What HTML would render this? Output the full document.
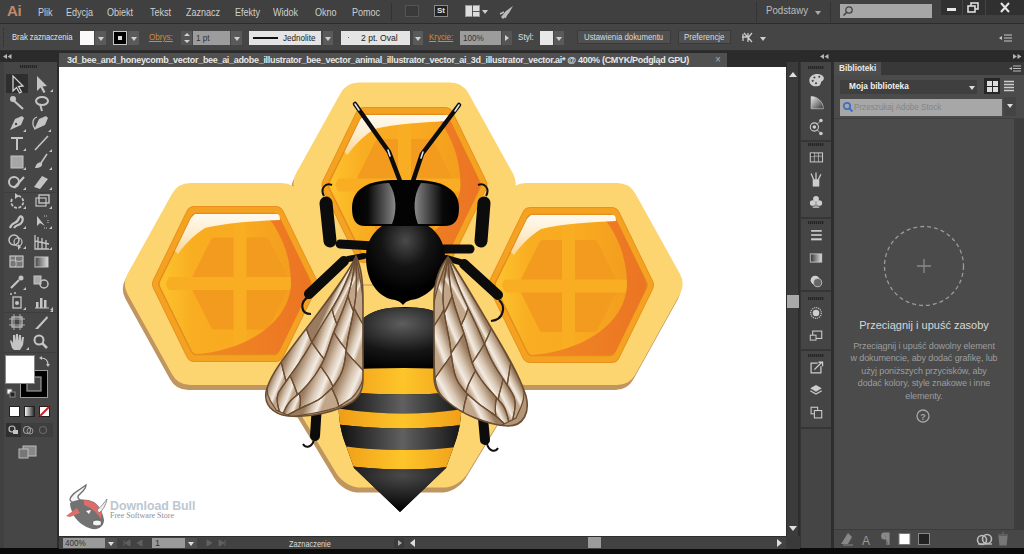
<!DOCTYPE html>
<html><head><meta charset="utf-8">
<style>
*{margin:0;padding:0;box-sizing:border-box}
html,body{width:1024px;height:554px;overflow:hidden;background:#0b0b0b;font-family:"Liberation Sans",sans-serif;position:relative}
.a{position:absolute}
.t{position:absolute;white-space:nowrap;line-height:1.15}
.arr{position:absolute;width:0;height:0;border-left:3px solid transparent;border-right:3px solid transparent;border-top:4px solid #cfcfcf}
</style></head><body>
<div class="a" style="left:0px;top:0px;width:1024px;height:24px;background:#404040;"></div>
<div class="a" style="left:0px;top:23px;width:1024px;height:1px;background:#2c2c2c;"></div>
<div class="t" style="left:7px;top:2px;font-size:15px;color:#c08a6a;font-weight:bold;letter-spacing:-0.3px;">Ai</div>
<div class="t" style="left:38px;top:6px;font-size:10.5px;color:#cfcfcf;transform:scaleX(0.86);transform-origin:0 0;">Plik</div>
<div class="t" style="left:66px;top:6px;font-size:10.5px;color:#cfcfcf;transform:scaleX(0.86);transform-origin:0 0;">Edycja</div>
<div class="t" style="left:107px;top:6px;font-size:10.5px;color:#cfcfcf;transform:scaleX(0.86);transform-origin:0 0;">Obiekt</div>
<div class="t" style="left:150px;top:6px;font-size:10.5px;color:#cfcfcf;transform:scaleX(0.86);transform-origin:0 0;">Tekst</div>
<div class="t" style="left:186px;top:6px;font-size:10.5px;color:#cfcfcf;transform:scaleX(0.86);transform-origin:0 0;">Zaznacz</div>
<div class="t" style="left:235px;top:6px;font-size:10.5px;color:#cfcfcf;transform:scaleX(0.86);transform-origin:0 0;">Efekty</div>
<div class="t" style="left:273px;top:6px;font-size:10.5px;color:#cfcfcf;transform:scaleX(0.86);transform-origin:0 0;">Widok</div>
<div class="t" style="left:315px;top:6px;font-size:10.5px;color:#cfcfcf;transform:scaleX(0.86);transform-origin:0 0;">Okno</div>
<div class="t" style="left:352px;top:6px;font-size:10.5px;color:#cfcfcf;transform:scaleX(0.86);transform-origin:0 0;">Pomoc</div>
<div class="a" style="left:391px;top:3px;width:1px;height:18px;background:#333;"></div>
<div class="a" style="left:405px;top:5px;width:14px;height:12px;background:#3a3a3a;border:1px solid #555;"></div>
<div class="a" style="left:434px;top:5px;width:14px;height:12px;background:#222;border:1px solid #8a8a8a;"></div>
<div class="t" style="left:437px;top:6px;font-size:8px;color:#e0e0e0;font-weight:bold;">St</div>
<div class="a" style="left:465px;top:5px;width:15px;height:12px;background:#ddd;border:1px solid #999;"></div>
<div class="a" style="left:472px;top:5px;width:1px;height:12px;background:#555;"></div>
<div class="a" style="left:473px;top:11px;width:7px;height:1px;background:#555;"></div>
<div class="arr" style="left:482px;top:10px"></div>
<svg class="a" style="left:497px;top:3px" width="20" height="18" viewBox="0 0 20 18"><path d="M4 14 L9 8 L16 3 L12 10 L6 16 Z" fill="#bdbdbd"/><path d="M3 11 L7 9 M8 15 L10 11" stroke="#bdbdbd" stroke-width="1.5"/></svg>
<div class="a" style="left:756px;top:2px;width:1px;height:20px;background:#333;"></div>
<div class="t" style="left:766px;top:5px;font-size:10px;color:#bdbdbd;transform:scaleX(0.97);transform-origin:0 0;">Podstawy</div>
<div class="arr" style="left:815px;top:11px;border-top-color:#aaa"></div>
<div class="a" style="left:830px;top:2px;width:1px;height:20px;background:#333;"></div>
<div class="a" style="left:840px;top:4px;width:92px;height:14px;background:#a6a6a6;"></div>
<svg class="a" style="left:842px;top:5px" width="12" height="12" viewBox="0 0 12 12"><circle cx="7" cy="5" r="3.2" fill="none" stroke="#444" stroke-width="1.3"/><path d="M4.8 7.3 L1.5 10.5" stroke="#444" stroke-width="1.6"/></svg>
<div class="a" style="left:941px;top:0px;width:83px;height:15px;background:#303030;"></div>
<div class="a" style="left:962px;top:0px;width:1px;height:15px;background:#444;"></div>
<div class="a" style="left:985px;top:0px;width:1px;height:15px;background:#444;"></div>
<div class="a" style="left:947px;top:8px;width:9px;height:3px;background:#e6e6e6;"></div>
<svg class="a" style="left:966px;top:1px" width="14" height="13" viewBox="0 0 14 13"><rect x="5" y="2" width="7" height="6" fill="none" stroke="#ddd" stroke-width="1.6"/><rect x="2" y="5" width="7" height="6" fill="#303030" stroke="#ddd" stroke-width="1.6"/></svg>
<svg class="a" style="left:999px;top:2px" width="12" height="11" viewBox="0 0 12 11"><path d="M2 1 L10 10 M10 1 L2 10" stroke="#e6e6e6" stroke-width="2"/></svg>
<div class="a" style="left:0px;top:24px;width:1024px;height:27px;background:#454545;"></div>
<div class="a" style="left:0px;top:50px;width:1024px;height:1px;background:#2e2e2e;"></div>
<div class="a" style="left:3px;top:28px;width:1px;height:1px;background:#2a2a2a;"></div>
<div class="a" style="left:3px;top:30px;width:1px;height:1px;background:#2a2a2a;"></div>
<div class="a" style="left:3px;top:32px;width:1px;height:1px;background:#2a2a2a;"></div>
<div class="a" style="left:3px;top:34px;width:1px;height:1px;background:#2a2a2a;"></div>
<div class="a" style="left:3px;top:36px;width:1px;height:1px;background:#2a2a2a;"></div>
<div class="a" style="left:3px;top:38px;width:1px;height:1px;background:#2a2a2a;"></div>
<div class="a" style="left:3px;top:40px;width:1px;height:1px;background:#2a2a2a;"></div>
<div class="a" style="left:3px;top:42px;width:1px;height:1px;background:#2a2a2a;"></div>
<div class="a" style="left:3px;top:44px;width:1px;height:1px;background:#2a2a2a;"></div>
<div class="a" style="left:3px;top:46px;width:1px;height:1px;background:#2a2a2a;"></div>
<div class="t" style="left:12px;top:32px;font-size:9px;color:#e2e2e2;transform:scaleX(0.85);transform-origin:0 0;">Brak zaznaczenia</div>
<div class="a" style="left:80px;top:31px;width:14px;height:14px;background:#fafafa;"></div>
<div class="a" style="left:95px;top:31px;width:11px;height:14px;background:#5a5a5a;"></div>
<div class="arr" style="left:98px;top:37px"></div>
<div class="a" style="left:113px;top:31px;width:14px;height:14px;background:#000;border:1px solid #c8c8c8;"></div>
<div class="a" style="left:118px;top:36px;width:4px;height:4px;background:#ddd;"></div>
<div class="a" style="left:128px;top:31px;width:11px;height:14px;background:#5a5a5a;"></div>
<div class="arr" style="left:131px;top:37px"></div>
<div class="t" style="left:149px;top:32px;font-size:9px;color:#d38a32;transform:scaleX(0.9);transform-origin:0 0;text-decoration:underline;">Obrys:</div>
<div class="a" style="left:181px;top:31px;width:11px;height:14px;background:#555;"></div>
<div class="a" style="left:184px;top:33px;width:0;height:0;border-left:3px solid transparent;border-right:3px solid transparent;border-bottom:3px solid #cfcfcf"></div>
<div class="arr" style="left:184px;top:40px;border-top-width:3px"></div>
<div class="a" style="left:193px;top:31px;width:37px;height:14px;background:#9c9c9c;"></div>
<div class="t" style="left:196px;top:33px;font-size:9px;color:#333;transform:scaleX(0.9);transform-origin:0 0;">1 pt</div>
<div class="a" style="left:231px;top:31px;width:11px;height:14px;background:#5a5a5a;"></div>
<div class="arr" style="left:234px;top:37px"></div>
<div class="a" style="left:249px;top:31px;width:72px;height:14px;background:#e4e4e4;"></div>
<div class="a" style="left:253px;top:37px;width:25px;height:2px;background:#111;"></div>
<div class="t" style="left:283px;top:33px;font-size:9px;color:#222;transform:scaleX(0.9);transform-origin:0 0;">Jednolite</div>
<div class="a" style="left:323px;top:31px;width:10px;height:14px;background:#5a5a5a;"></div>
<div class="arr" style="left:325px;top:37px"></div>
<div class="a" style="left:341px;top:31px;width:69px;height:14px;background:#e4e4e4;"></div>
<div class="a" style="left:348px;top:37px;width:1px;height:1px;background:#666;"></div>
<div class="t" style="left:361px;top:33px;font-size:9px;color:#222;transform:scaleX(0.95);transform-origin:0 0;">2 pt. Oval</div>
<div class="a" style="left:413px;top:31px;width:10px;height:14px;background:#5a5a5a;"></div>
<div class="arr" style="left:415px;top:37px"></div>
<div class="t" style="left:429px;top:32px;font-size:9px;color:#d38a32;transform:scaleX(0.88);transform-origin:0 0;text-decoration:underline;">Krycie:</div>
<div class="a" style="left:460px;top:31px;width:41px;height:14px;background:#9c9c9c;"></div>
<div class="t" style="left:463px;top:33px;font-size:9px;color:#333;transform:scaleX(0.9);transform-origin:0 0;">100%</div>
<div class="a" style="left:502px;top:31px;width:10px;height:14px;background:#555;"></div>
<div class="a" style="left:505px;top:35px;width:0;height:0;border-top:3px solid transparent;border-bottom:3px solid transparent;border-left:4px solid #cfcfcf"></div>
<div class="t" style="left:518px;top:32px;font-size:9px;color:#e2e2e2;transform:scaleX(0.9);transform-origin:0 0;">Styl:</div>
<div class="a" style="left:540px;top:31px;width:13px;height:14px;background:#e8e8e8;"></div>
<div class="a" style="left:554px;top:31px;width:10px;height:14px;background:#5a5a5a;"></div>
<div class="arr" style="left:556px;top:37px"></div>
<div class="a" style="left:577px;top:30px;width:94px;height:14px;background:#505050;border:1px solid #3a3a3a;"></div>
<div class="t" style="left:584px;top:32px;font-size:9px;color:#dcdcdc;transform:scaleX(0.87);transform-origin:0 0;">Ustawienia dokumentu</div>
<div class="a" style="left:678px;top:30px;width:53px;height:14px;background:#505050;border:1px solid #3a3a3a;"></div>
<div class="t" style="left:684px;top:32px;font-size:9px;color:#dcdcdc;transform:scaleX(0.88);transform-origin:0 0;">Preferencje</div>
<svg class="a" style="left:739px;top:30px" width="18" height="15" viewBox="0 0 18 15"><path d="M3 7 L8 7 M5 3 L13 12 M13 3 L9 8 M9 3 L9 12 M4 4 L4 11" stroke="#c8c8c8" stroke-width="1.3" fill="none"/></svg>
<div class="arr" style="left:760px;top:37px"></div>
<svg class="a" style="left:998px;top:32px" width="16" height="12" viewBox="0 0 16 12"><path d="M6 3 L14 3 M6 6 L14 6 M6 9 L14 9" stroke="#c8c8c8" stroke-width="1.2"/><path d="M1 6 L4 4 L4 8 Z" fill="#c8c8c8"/></svg>
<div class="a" style="left:0px;top:51px;width:59px;height:11px;background:#2a2a2a;"></div>
<svg class="a" style="left:3px;top:53px" width="10" height="7" viewBox="0 0 10 7"><path d="M0 3.5 L4 1 L4 6 Z M4.5 3.5 L8.5 1 L8.5 6 Z" fill="#b5b5b5"/></svg>
<div class="a" style="left:59px;top:51px;width:741px;height:16px;background:#2b2b2b;"></div>
<div class="a" style="left:59px;top:53px;width:668px;height:14px;background:#505050;"></div>
<div class="t" style="left:67px;top:55px;font-size:9px;color:#e6e6e6;font-weight:bold;letter-spacing:-0.31px;">3d_bee_and_honeycomb_vector_bee_ai_adobe_illustrator_bee_vector_animal_illustrator_vector_ai_3d_illustrator_vector.ai* @ 400% (CMYK/Podgląd GPU)</div>
<div class="t" style="left:715px;top:54px;font-size:10px;color:#aaa;">&#215;</div>
<div class="a" style="left:0px;top:62px;width:58px;height:486px;background:#464646;"></div>
<div class="a" style="left:0px;top:62px;width:4px;height:486px;background:#404040;"></div>
<div class="a" style="left:57px;top:62px;width:2px;height:486px;background:#2c2c2c;"></div>
<div class="a" style="left:20px;top:65px;width:17px;height:3px;background:#2a2a2a;background:repeating-linear-gradient(90deg,#252525 0 1px,#3c3c3c 1px 2px);"></div>
<div class="a" style="left:6px;top:74px;width:22px;height:19px;background:#2e2e2e;"></div>
<div class="a" style="left:4px;top:192px;width:52px;height:1px;background:#3d3d3d;"></div>
<div class="a" style="left:4px;top:312px;width:52px;height:1px;background:#3d3d3d;"></div>
<div class="a" style="left:4px;top:352px;width:52px;height:1px;background:#3d3d3d;"></div>
<svg class="a" style="left:0;top:62px" width="58" height="400" viewBox="0 62 58 400"><path d="M13 76 L13 91 L16.5 87.5 L19.5 93 L21.5 92 L18.5 86.5 L23 86 Z" fill="none" stroke="#d0d0d0" stroke-width="1.3"/><path d="M37 76 L37 91 L40.5 87.5 L43.5 93 L45.5 92 L42.5 86.5 L47 86 Z" fill="#c4c4c4"/><path d="M50 92 L53 92 L53 89 Z" fill="#c4c4c4"/><path d="M12 99 L23 109" stroke="#c4c4c4" stroke-width="2.2"/><circle cx="13" cy="99" r="3" fill="#c4c4c4"/><ellipse cx="42" cy="101" rx="6" ry="4" fill="none" stroke="#c4c4c4" stroke-width="2"/><path d="M40 104 L42 111" stroke="#c4c4c4" stroke-width="2"/><path d="M10 130 L15 119 L22 116 L24 118 L21 125 Z" fill="#c4c4c4"/><circle cx="16" cy="124" r="1.2" fill="#464646"/><path d="M23 132 L26 132 L26 129 Z" fill="#c4c4c4"/><path d="M34 130 L39 119 L46 116 L48 118 L45 125 Z" fill="#c4c4c4"/><path d="M35 129 C31 124 33 118 37 117" fill="none" stroke="#c4c4c4" stroke-width="1.2"/><path d="M48 132 L51 132 L51 129 Z" fill="#c4c4c4"/><path d="M11 137 L23 137 L23 139 L18 139 L18 150 L16 150 L16 139 L11 139 Z" fill="#c4c4c4"/><path d="M23 151 L26 151 L26 148 Z" fill="#c4c4c4"/><path d="M35 150 L48 136" stroke="#c4c4c4" stroke-width="1.6"/><path d="M49 152 L52 152 L52 149 Z" fill="#c4c4c4"/><rect x="11" y="156" width="12" height="12" fill="#a6a6a6" stroke="#c4c4c4" stroke-width="1"/><path d="M23 170 L26 170 L26 167 Z" fill="#c4c4c4"/><path d="M47 154 L41 163" stroke="#c4c4c4" stroke-width="1.5"/><path d="M35 168 C36 163 40 161 42 163 C43 166 40 168 35 168 Z" fill="#c4c4c4"/><path d="M49 170 L52 170 L52 167 Z" fill="#c4c4c4"/><circle cx="14" cy="182" r="5" fill="none" stroke="#c4c4c4" stroke-width="2"/><path d="M14 188 L24 177" stroke="#c4c4c4" stroke-width="2.2"/><path d="M23 190 L26 190 L26 187 Z" fill="#c4c4c4"/><path d="M34 187 L42 176 L48 179 L40 189 Z" fill="#c4c4c4"/><path d="M49 190 L52 190 L52 187 Z" fill="#c4c4c4"/><path d="M12 199 A6 6 0 1 0 16 196" fill="none" stroke="#c4c4c4" stroke-width="1.8" stroke-dasharray="3 1.5"/><path d="M15 193 L19 196 L15 199 Z" fill="#c4c4c4"/><path d="M23 209 L26 209 L26 206 Z" fill="#c4c4c4"/><rect x="36" y="198" width="10" height="8" fill="none" stroke="#c4c4c4" stroke-width="1.2"/><rect x="39" y="195" width="10" height="8" fill="none" stroke="#c4c4c4" stroke-width="1.4"/><path d="M49 209 L52 209 L52 206 Z" fill="#c4c4c4"/><path d="M10 228 C13 220 16 226 19 218 C21 214 24 218 22 222 C20 226 16 224 14 228" fill="none" stroke="#c4c4c4" stroke-width="2.2"/><path d="M23 229 L26 229 L26 226 Z" fill="#c4c4c4"/><path d="M37 216 L37 226 L40 223 L45 226 Z" fill="#c4c4c4"/><path d="M44 216 L48 216 M48 220 L48 224 M44 228 L48 228" stroke="#c4c4c4" stroke-width="1" stroke-dasharray="1 1"/><path d="M49 229 L52 229 L52 226 Z" fill="#c4c4c4"/><circle cx="14" cy="240" r="5" fill="none" stroke="#c4c4c4" stroke-width="1.5"/><circle cx="18" cy="242" r="4" fill="none" stroke="#c4c4c4" stroke-width="1.2"/><path d="M18 244 L18 250 L21 247 L24 250 Z" fill="#c4c4c4"/><path d="M23 249 L26 249 L26 246 Z" fill="#c4c4c4"/><path d="M35 235 L35 249 L49 249 M38 237 L38 249 M42 238 L42 249 M46 240 L46 249 M35 241 L49 244" fill="none" stroke="#c4c4c4" stroke-width="1.3"/><path d="M49 250 L52 250 L52 247 Z" fill="#c4c4c4"/><rect x="10" y="256" width="13" height="11" fill="#777" stroke="#c4c4c4" stroke-width="1.2"/><path d="M10 261 C14 258 18 264 23 260 M16 256 C14 260 18 264 15 267" fill="none" stroke="#c4c4c4" stroke-width="1"/><defs><linearGradient id="tg" x1="0" x2="1"><stop offset="0" stop-color="#444"/><stop offset="1" stop-color="#ddd"/></linearGradient></defs><rect x="35" y="257" width="13" height="10" fill="url(#tg)" stroke="#c4c4c4" stroke-width="1"/><path d="M11 288 L19 280" stroke="#c4c4c4" stroke-width="2.2"/><circle cx="21" cy="278" r="2.5" fill="#c4c4c4"/><path d="M23 290 L26 290 L26 287 Z" fill="#c4c4c4"/><rect x="34" y="276" width="7" height="8" fill="#aaa" stroke="#c4c4c4"/><circle cx="44" cy="284" r="4" fill="none" stroke="#c4c4c4" stroke-width="1.5"/><rect x="13" y="297" width="8" height="11" fill="none" stroke="#c4c4c4" stroke-width="1.3"/><circle cx="17" cy="303" r="2" fill="#c4c4c4"/><circle cx="11" cy="294" r="1" fill="#c4c4c4"/><circle cx="15" cy="293" r="1" fill="#c4c4c4"/><path d="M23 310 L26 310 L26 307 Z" fill="#c4c4c4"/><path d="M35 308 L49 308" stroke="#c4c4c4"/><rect x="36" y="302" width="2.5" height="6" fill="#c4c4c4"/><rect x="40" y="298" width="2.5" height="10" fill="#c4c4c4"/><rect x="44" y="300" width="2.5" height="8" fill="#c4c4c4"/><path d="M50 310 L53 310 L53 307 Z" fill="#c4c4c4"/><rect x="12" y="317" width="10" height="10" fill="none" stroke="#c4c4c4" stroke-width="1.2"/><path d="M9 319 L25 319 M9 325 L25 325 M14 314 L14 330 M20 314 L20 330" stroke="#c4c4c4" stroke-width="0.8"/><path d="M35 329 L47 316 L48 318 L38 329 Z" fill="#c4c4c4"/><path d="M50 312 L53 312 L53 309 Z" fill="#c4c4c4"/><path d="M12 348 L10 341 L11 340 L13 343 L13 335 L15 335 L15 341 L16 334 L18 334 L18 341 L19 335 L21 335 L21 342 L22 337 L24 337 L23 345 L20 350 L14 350 Z" fill="#c4c4c4"/><path d="M26 350 L29 350 L29 347 Z" fill="#c4c4c4"/><circle cx="39" cy="340" r="4.5" fill="none" stroke="#c4c4c4" stroke-width="2"/><path d="M42 343 L47 348" stroke="#c4c4c4" stroke-width="2.5"/><rect x="20.5" y="370.5" width="27" height="27" fill="#000" stroke="#999" stroke-width="1"/><rect x="27" y="377" width="14" height="14" fill="#444" stroke="#999" stroke-width="1.2"/><rect x="5.5" y="355.5" width="29" height="28" fill="#fff" stroke="#888" stroke-width="1"/><path d="M41 358 C46 358 48 361 48 365" fill="none" stroke="#c4c4c4" stroke-width="1.2"/><path d="M39 358 L42 356 L42 360 Z M46 364 L50 364 L48 367 Z" fill="#c4c4c4"/><rect x="7" y="389" width="5" height="5" fill="#fff" stroke="#666"/><rect x="10" y="392" width="5" height="5" fill="#222" stroke="#888"/><rect x="9.5" y="406.5" width="10" height="10" fill="#fff" stroke="#222"/><defs><linearGradient id="tg2" x1="0" x2="1"><stop offset="0" stop-color="#fff"/><stop offset="1" stop-color="#222"/></linearGradient></defs><rect x="24.5" y="406.5" width="10" height="10" fill="url(#tg2)" stroke="#222"/><rect x="39.5" y="406.5" width="10" height="10" fill="#fff" stroke="#222"/><path d="M40 416 L49 407" stroke="#d02020" stroke-width="2"/><rect x="6" y="423" width="47" height="14" fill="#3e3e3e"/><rect x="6" y="423" width="15" height="14" fill="#2f2f2f"/><circle cx="12" cy="429" r="3" fill="none" stroke="#c4c4c4" stroke-width="1.2"/><rect x="13" y="430" width="5" height="4" fill="#c4c4c4"/><circle cx="27" cy="430" r="3.5" fill="none" stroke="#999" stroke-width="1.2"/><circle cx="30" cy="431" r="3" fill="none" stroke="#999" stroke-width="1"/><circle cx="43" cy="430" r="3.5" fill="none" stroke="#666" stroke-width="1.2"/><rect x="23" y="446" width="13" height="10" fill="#888" stroke="#bbb"/><rect x="19" y="449" width="9" height="9" fill="#777" stroke="#bbb"/></svg>
<div class="a" style="left:59px;top:67px;width:727px;height:469px;background:#fff"></div>
<svg class="a" style="left:59px;top:67px" width="727" height="469" viewBox="59 67 727 469">
<defs>
<linearGradient id="honey" x1="0" y1="0" x2="1" y2="0"><stop offset="0" stop-color="#fcc02c"/><stop offset="0.2" stop-color="#f9ad21"/><stop offset="0.6" stop-color="#f8a920"/><stop offset="1" stop-color="#f29a1e"/></linearGradient>
<linearGradient id="cres" x1="0" y1="0" x2="1" y2="0"><stop offset="0" stop-color="#f08a22"/><stop offset="1" stop-color="#ec7424"/></linearGradient>
<linearGradient id="glare" x1="0" y1="0" x2="0" y2="1"><stop offset="0" stop-color="#fffaf0"/><stop offset="0.5" stop-color="#fdeccc"/><stop offset="1" stop-color="#fbd393"/></linearGradient>
<linearGradient id="wing" gradientUnits="userSpaceOnUse" x1="280" y1="300" x2="370" y2="345"><stop offset="0" stop-color="#9e8064"/><stop offset="0.18" stop-color="#e8ddd0"/><stop offset="0.32" stop-color="#ae9073"/><stop offset="0.5" stop-color="#efe6dc"/><stop offset="0.66" stop-color="#a98b6d"/><stop offset="0.82" stop-color="#e2d4c3"/><stop offset="1" stop-color="#b0927a"/></linearGradient>
<linearGradient id="wingR" gradientUnits="userSpaceOnUse" x1="530" y1="300" x2="440" y2="345"><stop offset="0" stop-color="#9e8064"/><stop offset="0.18" stop-color="#e8ddd0"/><stop offset="0.32" stop-color="#ae9073"/><stop offset="0.5" stop-color="#efe6dc"/><stop offset="0.66" stop-color="#a98b6d"/><stop offset="0.82" stop-color="#e2d4c3"/><stop offset="1" stop-color="#b0927a"/></linearGradient>
<radialGradient id="thor" cx="0.5" cy="0.25" r="0.6"><stop offset="0" stop-color="#4a4a4a"/><stop offset="0.5" stop-color="#141414"/><stop offset="1" stop-color="#000"/></radialGradient>
<linearGradient id="eyeL" x1="0" x2="1"><stop offset="0" stop-color="#000"/><stop offset="0.35" stop-color="#080808"/><stop offset="0.88" stop-color="#6e6e6e"/><stop offset="1" stop-color="#8a8a8a"/></linearGradient>
<linearGradient id="eyeR" x1="1" x2="0"><stop offset="0" stop-color="#000"/><stop offset="0.35" stop-color="#080808"/><stop offset="0.88" stop-color="#6e6e6e"/><stop offset="1" stop-color="#8a8a8a"/></linearGradient>
<linearGradient id="ystripe" x1="0" y1="0" x2="1" y2="0"><stop offset="0" stop-color="#ef9a16"/><stop offset="0.5" stop-color="#fdc52a"/><stop offset="1" stop-color="#ef9a16"/></linearGradient>
<linearGradient id="bstripe" x1="0" y1="0" x2="1" y2="0"><stop offset="0" stop-color="#0a0a0a"/><stop offset="0.5" stop-color="#606060"/><stop offset="1" stop-color="#0a0a0a"/></linearGradient>
<radialGradient id="abtop" cx="0.5" cy="0.25" r="0.75"><stop offset="0" stop-color="#5e5e5e"/><stop offset="0.6" stop-color="#151515"/><stop offset="1" stop-color="#000"/></radialGradient>
<linearGradient id="rimg" x1="0" y1="0" x2="0" y2="1"><stop offset="0" stop-color="#fdd877"/><stop offset="1" stop-color="#fbd068"/></linearGradient>
</defs>
<polygon points="324.0,289.0 279.6,369.0 188.4,369.0 144.0,289.0 188.4,209.0 279.6,209.0" fill="#c09660" stroke="#c09660" stroke-width="42" stroke-linejoin="round" />
<polygon points="492.5,188.5 448.1,268.5 356.9,268.5 312.5,188.5 356.9,108.5 448.1,108.5" fill="#c09660" stroke="#c09660" stroke-width="42" stroke-linejoin="round" />
<polygon points="659.5,289.0 615.1,369.0 523.9,369.0 479.5,289.0 523.9,209.0 615.1,209.0" fill="#c09660" stroke="#c09660" stroke-width="42" stroke-linejoin="round" />
<polygon points="483.0,391.5 440.1,462.5 359.9,462.5 317.0,391.5 359.9,320.5 440.1,320.5" fill="#c09660" stroke="#c09660" stroke-width="60" stroke-linejoin="round" />
<polygon points="326.0,284.0 281.6,364.0 190.4,364.0 146.0,284.0 190.4,204.0 281.6,204.0" fill="#fcd470" stroke="#fcd470" stroke-width="42" stroke-linejoin="round" />
<polygon points="494.5,183.5 450.1,263.5 358.9,263.5 314.5,183.5 358.9,103.5 450.1,103.5" fill="#fcd470" stroke="#fcd470" stroke-width="42" stroke-linejoin="round" />
<polygon points="661.5,284.0 617.1,364.0 525.9,364.0 481.5,284.0 525.9,204.0 617.1,204.0" fill="#fcd470" stroke="#fcd470" stroke-width="42" stroke-linejoin="round" />
<polygon points="485.0,386.5 442.1,457.5 361.9,457.5 319.0,386.5 361.9,315.5 442.1,315.5" fill="#fcd470" stroke="#fcd470" stroke-width="60" stroke-linejoin="round" />
<polygon points="309.0,284.0 275.4,353.0 194.6,353.0 161.0,284.0 194.6,215.0 275.4,215.0" fill="#ea911c" stroke="#ea911c" stroke-width="18" stroke-linejoin="round" />
<polygon points="309.1,284.0 275.5,353.0 194.5,353.0 160.9,284.0 194.5,215.0 275.5,215.0" fill="#f4a221" stroke="#f4a221" stroke-width="16" stroke-linejoin="round" />
<polygon points="304.8,284.0 273.0,348.3 197.0,348.3 165.2,284.0 197.0,219.7 273.0,219.7" fill="#e58c1c" stroke="#e58c1c" stroke-width="14" stroke-linejoin="round" />
<polygon points="304.3,284.0 272.8,348.0 197.2,348.0 165.7,284.0 197.2,220.0 272.8,220.0" fill="url(#honey)" stroke="url(#honey)" stroke-width="12" stroke-linejoin="round" />
<clipPath id="hcL"><polygon points="304.3,284.0 272.8,348.0 197.2,348.0 165.7,284.0 197.2,220.0 272.8,220.0" fill="#000" stroke="#000" stroke-width="12" stroke-linejoin="round" />
</clipPath><g clip-path="url(#hcL)"><polygon points="286.5,283.5 265.5,325.5 214.5,325.5 193.5,283.5 214.5,241.5 265.5,241.5" fill="#f39b1f" stroke="#f39b1f" stroke-width="8" stroke-linejoin="round" />
<rect x="233.5" y="204" width="13" height="160" fill="#f8ad23"/>
<rect x="145" y="277.0" width="180" height="13" fill="#f8ad23"/>
</g><path d="M265,214 L273,214 C277,214 279,216 281,220 L309,278 C311,282 311,286 309,290 L281,348 C279,352 277,354 273,354 L197,354 C245,350 289,324 291,284 C291,254 279,229 265,214 Z" fill="url(#cres)"/>
<path d="M195,214 L277,214 C279,214 280,216 280,220 C255,221 225,223 205,228 C195,234 185,244 178,254 L175,251 L191,218 Z" fill="url(#glare)"/>
<polygon points="478.5,185.0 444.9,254.0 364.1,254.0 330.5,185.0 364.1,116.0 444.9,116.0" fill="#ea911c" stroke="#ea911c" stroke-width="18" stroke-linejoin="round" />
<polygon points="478.6,185.0 445.0,254.0 364.0,254.0 330.4,185.0 364.0,116.0 445.0,116.0" fill="#f4a221" stroke="#f4a221" stroke-width="16" stroke-linejoin="round" />
<polygon points="474.3,185.0 442.5,249.3 366.5,249.3 334.7,185.0 366.5,120.7 442.5,120.7" fill="#e58c1c" stroke="#e58c1c" stroke-width="14" stroke-linejoin="round" />
<polygon points="473.8,185.0 442.3,249.0 366.7,249.0 335.2,185.0 366.7,121.0 442.3,121.0" fill="url(#honey)" stroke="url(#honey)" stroke-width="12" stroke-linejoin="round" />
<clipPath id="hcC"><polygon points="473.8,185.0 442.3,249.0 366.7,249.0 335.2,185.0 366.7,121.0 442.3,121.0" fill="#000" stroke="#000" stroke-width="12" stroke-linejoin="round" />
</clipPath><g clip-path="url(#hcC)"><polygon points="451.0,185.0 430.0,227.0 379.0,227.0 358.0,185.0 379.0,143.0 430.0,143.0" fill="#f39b1f" stroke="#f39b1f" stroke-width="8" stroke-linejoin="round" />
<rect x="398.0" y="105" width="13" height="160" fill="#f8ad23"/>
<rect x="314.5" y="178.5" width="180" height="13" fill="#f8ad23"/>
</g><path d="M434.5,115 L442.5,115 C446.5,115 448.5,117 450.5,121 L478.5,179 C480.5,183 480.5,187 478.5,191 L450.5,249 C448.5,253 446.5,255 442.5,255 L366.5,255 C414.5,251 458.5,225 460.5,185 C460.5,155 448.5,130 434.5,115 Z" fill="url(#cres)"/>
<path d="M364.5,115 L446.5,115 C448.5,115 449.5,117 449.5,121 C424.5,122 394.5,124 374.5,129 C364.5,135 354.5,145 347.5,155 L344.5,152 L360.5,119 Z" fill="url(#glare)"/>
<polygon points="645.0,285.0 611.4,354.0 530.6,354.0 497.0,285.0 530.6,216.0 611.4,216.0" fill="#ea911c" stroke="#ea911c" stroke-width="18" stroke-linejoin="round" />
<polygon points="645.1,285.0 611.5,354.0 530.5,354.0 496.9,285.0 530.5,216.0 611.5,216.0" fill="#f4a221" stroke="#f4a221" stroke-width="16" stroke-linejoin="round" />
<polygon points="640.8,285.0 609.0,349.3 533.0,349.3 501.2,285.0 533.0,220.7 609.0,220.7" fill="#e58c1c" stroke="#e58c1c" stroke-width="14" stroke-linejoin="round" />
<polygon points="640.3,285.0 608.8,349.0 533.2,349.0 501.7,285.0 533.2,221.0 608.8,221.0" fill="url(#honey)" stroke="url(#honey)" stroke-width="12" stroke-linejoin="round" />
<clipPath id="hcR"><polygon points="640.3,285.0 608.8,349.0 533.2,349.0 501.7,285.0 533.2,221.0 608.8,221.0" fill="#000" stroke="#000" stroke-width="12" stroke-linejoin="round" />
</clipPath><g clip-path="url(#hcR)"><polygon points="615.0,286.0 594.0,328.0 543.0,328.0 522.0,286.0 543.0,244.0 594.0,244.0" fill="#f39b1f" stroke="#f39b1f" stroke-width="8" stroke-linejoin="round" />
<rect x="562.0" y="205" width="13" height="160" fill="#f8ad23"/>
<rect x="481" y="279.5" width="180" height="13" fill="#f8ad23"/>
</g><path d="M601,215 L609,215 C613,215 615,217 617,221 L645,279 C647,283 647,287 645,291 L617,349 C615,353 613,355 609,355 L533,355 C581,351 625,325 627,285 C627,255 615,230 601,215 Z" fill="url(#cres)"/>
<path d="M531,215 L613,215 C615,215 616,217 616,221 C591,222 561,224 541,229 C531,235 521,245 514,255 L511,252 L527,219 Z" fill="url(#glare)"/>
<path d="M355,104 L389,152 L400,181" fill="none" stroke="#0c0c0c" stroke-width="4.5" stroke-linecap="round" stroke-linejoin="round"/>
<path d="M459,105 L422,154 L413,181" fill="none" stroke="#0c0c0c" stroke-width="4.5" stroke-linecap="round" stroke-linejoin="round"/>
<path d="M355,104 L359,110" stroke="#e6e6e6" stroke-width="1.6" stroke-linecap="round"/>
<path d="M388,150 L390,156" stroke="#e6e6e6" stroke-width="1.6" stroke-linecap="round"/>
<path d="M459,105 L455,111" stroke="#e6e6e6" stroke-width="1.6" stroke-linecap="round"/>
<path d="M423,152 L421,158" stroke="#e6e6e6" stroke-width="1.6" stroke-linecap="round"/>
<path d="M326,203 L330,241" fill="none" stroke="#0c0c0c" stroke-width="13" stroke-linecap="round"/>
<path d="M340,244 L374,246" fill="none" stroke="#0c0c0c" stroke-width="9" stroke-linecap="round"/>
<path d="M484,203 L481,241" fill="none" stroke="#0c0c0c" stroke-width="13" stroke-linecap="round"/>
<path d="M444,249 L470,249" fill="none" stroke="#0c0c0c" stroke-width="9" stroke-linecap="round"/>
<path d="M324,196 C320,189 325,182 332,185" fill="none" stroke="#111" stroke-width="2"/>
<path d="M486,196 C490,189 485,182 478,185" fill="none" stroke="#111" stroke-width="2"/>
<path d="M344,261 L309,294" fill="none" stroke="#0c0c0c" stroke-width="10" stroke-linecap="round"/>
<path d="M364,256 L348,259" fill="none" stroke="#0c0c0c" stroke-width="6" stroke-linecap="round"/>
<path d="M464,264 L498,295" fill="none" stroke="#0c0c0c" stroke-width="10" stroke-linecap="round"/>
<path d="M446,258 L460,262" fill="none" stroke="#0c0c0c" stroke-width="6" stroke-linecap="round"/>
<path d="M308,297 C300,302 300,314 311,314" fill="none" stroke="#111" stroke-width="2.2"/>
<path d="M499,300 C506,306 504,320 491,321" fill="none" stroke="#111" stroke-width="2.2"/>
<path d="M317,404 L315,436" fill="none" stroke="#0c0c0c" stroke-width="10" stroke-linecap="round"/>
<path d="M482,407 L485,440" fill="none" stroke="#0c0c0c" stroke-width="10" stroke-linecap="round"/>
<path d="M314,440 C312,447 306,449 303,444" fill="none" stroke="#111" stroke-width="2"/>
<path d="M487,444 C489,451 495,453 498,448" fill="none" stroke="#111" stroke-width="2"/>
<path d="M405,307 C438,307 455,318 456,342 L461,398 C462,410 461,425 456,440 L446,468 L400,512 L354,468 L344,440 C339,425 338,410 339,398 L353,342 C354,318 372,307 405,307 Z" fill="#050505"/>
<clipPath id="abclip"><path d="M405,307 C438,307 455,318 456,342 L461,398 C462,410 461,425 456,440 L446,468 L400,512 L354,468 L344,440 C339,425 338,410 339,398 L353,342 C354,318 372,307 405,307 Z"/></clipPath>
<g clip-path="url(#abclip)">
<rect x="340" y="308" width="125" height="63" fill="url(#abtop)"/>
<path d="M335,370 Q405,366 470,370 L470,391 Q405,398 335,391 Z" fill="url(#ystripe)"/>
<path d="M335,391 Q405,398 470,391 L470,408 Q405,419 335,408 Z" fill="url(#bstripe)"/>
<path d="M335,408 Q405,419 470,408 L470,424 Q405,433 335,424 Z" fill="url(#ystripe)"/>
<path d="M335,424 Q405,433 470,424 L470,445 Q405,455 335,445 Z" fill="url(#bstripe)"/>
<path d="M335,445 Q405,455 470,445 L470,464 Q405,475 335,464 Z" fill="url(#ystripe)"/>
<radialGradient id="tip" cx="0.5" cy="0.2" r="0.6"><stop offset="0" stop-color="#4a4a4a"/><stop offset="1" stop-color="#050505"/></radialGradient>
<path d="M335,464 Q405,475 470,464 L470,520 L335,520 Z" fill="url(#tip)"/>
</g>
<path d="M405,219 C428,219 445,236 445,257 C445,278 432,294 416,299 C410,300 406,301 403,305 C400,301 396,300 390,299 C375,294 366,278 366,257 C366,236 382,219 405,219 Z" fill="url(#thor)"/>
<path d="M352,208 C352,190 366,181 392,180 L418,180 C444,181 459,190 459,208 C459,220 455,226 444,226 L365,226 C356,226 352,220 352,208 Z" fill="#030303"/>
<path d="M353,208 C353,193 366,184 389,183 C397,195 397,212 392,224 L368,224 C358,224 353,218 353,208 Z" fill="url(#eyeL)"/>
<path d="M458,208 C458,193 445,184 421,183 C413,195 413,212 418,224 L443,224 C453,224 458,218 458,208 Z" fill="url(#eyeR)"/>
<clipPath id="wl"><path d="M356,256 C350,270 330,298 299,338 C286,356 270,374 266,392 C264,404 272,414 288,416 C310,418 336,412 352,402 C360,396 363,390 363,378 L363,300 C363,280 361,266 356,256 Z"/></clipPath><clipPath id="wr"><path d="M448,257 C456,268 470,292 490,326 C502,346 518,372 526,396 C530,412 524,426 508,426 C486,425 462,414 448,402 C438,394 434,388 434,376 L434,300 C434,282 440,266 448,257 Z"/></clipPath>
<filter id="bl" x="-20%" y="-20%" width="140%" height="140%"><feGaussianBlur stdDeviation="2"/></filter>
<g clip-path="url(#wl)"><path d="M356,256 C350,270 330,298 299,338 C286,356 270,374 266,392 C264,404 272,414 288,416 C310,418 336,412 352,402 C360,396 363,390 363,378 L363,300 C363,280 361,266 356,256 Z" fill="#b39577"/><defs><linearGradient id="wgl0" gradientUnits="userSpaceOnUse" x1="334.5" y1="291.6" x2="340.2" y2="294.2"><stop offset="0" stop-color="#9a7b5f"/><stop offset="0.45" stop-color="#d8c6b2"/><stop offset="0.75" stop-color="#f3ece4"/><stop offset="1" stop-color="#c2a68a"/></linearGradient><linearGradient id="wgl1" gradientUnits="userSpaceOnUse" x1="289.7" y1="348.7" x2="304.4" y2="354.6"><stop offset="0" stop-color="#9a7b5f"/><stop offset="0.45" stop-color="#d8c6b2"/><stop offset="0.75" stop-color="#f3ece4"/><stop offset="1" stop-color="#c2a68a"/></linearGradient><linearGradient id="wgl2" gradientUnits="userSpaceOnUse" x1="267.0" y1="388.0" x2="278.4" y2="392.6"><stop offset="0" stop-color="#9a7b5f"/><stop offset="0.45" stop-color="#d8c6b2"/><stop offset="0.75" stop-color="#f3ece4"/><stop offset="1" stop-color="#c2a68a"/></linearGradient><linearGradient id="wgl3" gradientUnits="userSpaceOnUse" x1="345.8" y1="282.6" x2="350.8" y2="285.1"><stop offset="0" stop-color="#9a7b5f"/><stop offset="0.45" stop-color="#d8c6b2"/><stop offset="0.75" stop-color="#f3ece4"/><stop offset="1" stop-color="#c2a68a"/></linearGradient><linearGradient id="wgl4" gradientUnits="userSpaceOnUse" x1="318.1" y1="331.3" x2="332.2" y2="336.2"><stop offset="0" stop-color="#9a7b5f"/><stop offset="0.45" stop-color="#d8c6b2"/><stop offset="0.75" stop-color="#f3ece4"/><stop offset="1" stop-color="#c2a68a"/></linearGradient><linearGradient id="wgl5" gradientUnits="userSpaceOnUse" x1="299.6" y1="362.0" x2="318.3" y2="370.1"><stop offset="0" stop-color="#9a7b5f"/><stop offset="0.45" stop-color="#d8c6b2"/><stop offset="0.75" stop-color="#f3ece4"/><stop offset="1" stop-color="#c2a68a"/></linearGradient><linearGradient id="wgl6" gradientUnits="userSpaceOnUse" x1="277.2" y1="397.1" x2="289.5" y2="402.0"><stop offset="0" stop-color="#9a7b5f"/><stop offset="0.45" stop-color="#d8c6b2"/><stop offset="0.75" stop-color="#f3ece4"/><stop offset="1" stop-color="#c2a68a"/></linearGradient><linearGradient id="wgl7" gradientUnits="userSpaceOnUse" x1="352.6" y1="276.4" x2="356.4" y2="278.3"><stop offset="0" stop-color="#9a7b5f"/><stop offset="0.45" stop-color="#d8c6b2"/><stop offset="0.75" stop-color="#f3ece4"/><stop offset="1" stop-color="#c2a68a"/></linearGradient><linearGradient id="wgl8" gradientUnits="userSpaceOnUse" x1="338.7" y1="320.1" x2="350.8" y2="324.6"><stop offset="0" stop-color="#9a7b5f"/><stop offset="0.45" stop-color="#d8c6b2"/><stop offset="0.75" stop-color="#f3ece4"/><stop offset="1" stop-color="#c2a68a"/></linearGradient><linearGradient id="wgl9" gradientUnits="userSpaceOnUse" x1="325.6" y1="355.4" x2="344.4" y2="362.7"><stop offset="0" stop-color="#9a7b5f"/><stop offset="0.45" stop-color="#d8c6b2"/><stop offset="0.75" stop-color="#f3ece4"/><stop offset="1" stop-color="#c2a68a"/></linearGradient><linearGradient id="wgl10" gradientUnits="userSpaceOnUse" x1="306.3" y1="385.9" x2="326.0" y2="393.9"><stop offset="0" stop-color="#9a7b5f"/><stop offset="0.45" stop-color="#d8c6b2"/><stop offset="0.75" stop-color="#f3ece4"/><stop offset="1" stop-color="#c2a68a"/></linearGradient><linearGradient id="wgl11" gradientUnits="userSpaceOnUse" x1="286.2" y1="407.1" x2="295.6" y2="410.8"><stop offset="0" stop-color="#9a7b5f"/><stop offset="0.45" stop-color="#d8c6b2"/><stop offset="0.75" stop-color="#f3ece4"/><stop offset="1" stop-color="#c2a68a"/></linearGradient><linearGradient id="wgl12" gradientUnits="userSpaceOnUse" x1="356.4" y1="283.0" x2="361.2" y2="285.3"><stop offset="0" stop-color="#9a7b5f"/><stop offset="0.45" stop-color="#d8c6b2"/><stop offset="0.75" stop-color="#f3ece4"/><stop offset="1" stop-color="#c2a68a"/></linearGradient><linearGradient id="wgl13" gradientUnits="userSpaceOnUse" x1="348.4" y1="335.7" x2="363.1" y2="340.8"><stop offset="0" stop-color="#9a7b5f"/><stop offset="0.45" stop-color="#d8c6b2"/><stop offset="0.75" stop-color="#f3ece4"/><stop offset="1" stop-color="#c2a68a"/></linearGradient><linearGradient id="wgl14" gradientUnits="userSpaceOnUse" x1="340.3" y1="375.3" x2="361.2" y2="384.0"><stop offset="0" stop-color="#9a7b5f"/><stop offset="0.45" stop-color="#d8c6b2"/><stop offset="0.75" stop-color="#f3ece4"/><stop offset="1" stop-color="#c2a68a"/></linearGradient><linearGradient id="wgl15" gradientUnits="userSpaceOnUse" x1="305.4" y1="405.9" x2="320.4" y2="411.9"><stop offset="0" stop-color="#9a7b5f"/><stop offset="0.45" stop-color="#d8c6b2"/><stop offset="0.75" stop-color="#f3ece4"/><stop offset="1" stop-color="#c2a68a"/></linearGradient></defs><path d="M356.0,256.0 L356.0,256.0 L356.0,256.0 L356.0,256.0 L356.0,256.0 L356.0,256.0 L356.0,256.0 L356.0,256.0 L356.0,256.0 L353.5,262.8 L349.8,272.7 L345.3,283.6 L340.2,294.2 L334.1,305.1 L327.3,316.3 L320.7,327.0 L311.8,342.3 L311.0,340.5 L310.1,338.6 L309.4,336.8 L308.7,335.0 L308.0,333.3 L307.4,331.5 L306.9,329.8 L306.4,328.1 L310.1,323.3 L318.3,312.9 L326.7,302.1 L334.5,291.6 L341.2,281.6 L347.3,271.4 L352.4,262.3 Z" fill="url(#wgl0)"/><path d="M306.4,328.1 L306.9,329.8 L307.4,331.5 L308.0,333.3 L308.7,335.0 L309.4,336.8 L310.1,338.6 L311.0,340.5 L311.8,342.3 L312.1,341.8 L309.6,346.2 L307.0,350.4 L304.4,354.6 L301.7,358.7 L299.0,363.0 L295.3,368.4 L286.0,381.4 L285.4,379.0 L284.8,376.6 L284.1,374.1 L283.5,371.5 L282.8,369.0 L282.2,366.4 L281.6,363.8 L280.9,361.1 L280.4,361.9 L284.0,356.5 L286.8,352.6 L289.7,348.7 L292.8,344.9 L296.0,340.9 L299.3,336.9 Z" fill="url(#wgl1)"/><path d="M280.9,361.1 L281.6,363.8 L282.2,366.4 L282.8,369.0 L283.5,371.5 L284.1,374.1 L284.8,376.6 L285.4,379.0 L286.0,381.4 L287.4,379.5 L284.1,384.1 L281.1,388.5 L278.4,392.6 L277.1,398.3 L277.5,403.6 L278.5,408.2 L279.2,411.4 L278.8,411.2 L278.4,411.1 L278.0,410.9 L277.6,410.7 L277.2,410.5 L276.8,410.4 L276.4,410.2 L276.0,410.0 L273.8,406.2 L270.5,400.9 L267.7,394.6 L267.0,388.0 L268.1,383.5 L270.1,378.7 L272.9,373.6 Z" fill="url(#wgl2)"/><path d="M356.0,256.0 L356.0,256.0 L356.0,256.0 L356.0,256.0 L356.0,256.0 L356.0,256.0 L356.0,256.0 L356.0,256.0 L356.0,256.0 L355.1,261.0 L354.0,268.1 L352.6,276.4 L350.8,285.1 L348.7,293.4 L346.0,301.5 L342.9,309.9 L337.0,324.2 L336.1,322.3 L335.3,320.3 L334.6,318.3 L334.0,316.3 L333.4,314.4 L332.9,312.4 L332.4,310.5 L332.0,308.6 L333.5,306.1 L338.1,298.1 L342.2,290.4 L345.8,282.6 L349.1,274.6 L351.9,267.0 L354.3,260.6 Z" fill="url(#wgl3)"/><path d="M332.0,308.6 L332.4,310.5 L332.9,312.4 L333.4,314.4 L334.0,316.3 L334.6,318.3 L335.3,320.3 L336.1,322.3 L337.0,324.2 L337.5,323.0 L335.6,327.5 L333.8,331.9 L332.2,336.2 L330.6,340.8 L329.1,345.3 L327.7,349.6 L324.1,359.1 L322.4,356.9 L320.7,354.8 L319.1,352.6 L317.5,350.5 L316.0,348.4 L314.6,346.4 L313.2,344.3 L311.8,342.3 L311.2,343.4 L313.5,339.5 L315.8,335.4 L318.1,331.3 L320.6,327.2 L323.1,323.0 L325.8,318.7 Z" fill="url(#wgl4)"/><path d="M311.8,342.3 L313.2,344.3 L314.6,346.4 L316.0,348.4 L317.5,350.5 L319.1,352.6 L320.7,354.8 L322.4,356.9 L324.1,359.1 L324.5,358.0 L322.8,361.9 L320.7,365.8 L318.3,370.1 L315.4,374.5 L311.6,379.7 L307.5,384.6 L297.3,394.8 L296.8,392.7 L296.1,390.5 L295.2,388.2 L294.3,385.8 L293.3,383.4 L292.3,380.8 L291.2,378.3 L290.2,375.6 L289.1,377.1 L293.0,371.7 L296.8,366.2 L299.6,362.0 L302.1,358.2 L304.4,354.6 L306.7,350.9 Z" fill="url(#wgl5)"/><path d="M290.2,375.6 L291.2,378.3 L292.3,380.8 L293.3,383.4 L294.3,385.8 L295.2,388.2 L296.1,390.5 L296.8,392.7 L297.3,394.8 L299.9,392.6 L296.4,395.6 L292.7,398.4 L289.5,402.0 L287.1,405.4 L285.4,408.6 L284.2,411.2 L283.2,413.2 L282.7,412.9 L282.2,412.7 L281.7,412.5 L281.2,412.3 L280.7,412.1 L280.2,411.8 L279.7,411.6 L279.2,411.4 L278.7,408.9 L277.9,405.6 L277.2,401.5 L277.2,397.1 L278.4,392.6 L280.5,389.4 L282.9,385.9 Z" fill="url(#wgl6)"/><path d="M356.0,256.0 L356.0,256.0 L356.0,256.0 L356.0,256.0 L356.0,256.0 L356.0,256.0 L356.0,256.0 L356.0,256.0 L356.0,256.0 L356.0,259.9 L356.2,265.1 L356.3,271.4 L356.4,278.3 L356.3,285.4 L356.1,292.3 L355.5,298.7 L353.5,311.4 L352.6,309.3 L351.8,307.3 L351.0,305.3 L350.3,303.4 L349.7,301.4 L349.0,299.5 L348.5,297.6 L348.0,295.8 L348.1,295.4 L349.8,289.3 L351.3,282.9 L352.6,276.4 L353.7,270.1 L354.6,264.4 L355.4,259.5 Z" fill="url(#wgl7)"/><path d="M348.0,295.8 L348.5,297.6 L349.0,299.5 L349.7,301.4 L350.3,303.4 L351.0,305.3 L351.8,307.3 L352.6,309.3 L353.5,311.4 L353.8,310.1 L352.8,314.9 L351.8,319.8 L350.8,324.6 L349.8,329.4 L348.8,334.0 L347.8,338.5 L346.2,349.8 L344.4,347.5 L342.6,345.2 L340.9,342.9 L339.3,340.7 L337.8,338.4 L336.3,336.3 L335.0,334.2 L333.7,332.3 L333.2,333.4 L335.0,329.1 L336.8,324.7 L338.7,320.1 L340.6,315.4 L342.5,310.8 L344.3,306.1 Z" fill="url(#wgl8)"/><path d="M333.7,332.3 L335.0,334.2 L336.3,336.3 L337.8,338.4 L339.3,340.7 L340.9,342.9 L342.6,345.2 L344.4,347.5 L346.2,349.8 L346.4,348.4 L345.8,353.3 L345.2,358.1 L344.4,362.7 L343.4,367.1 L342.0,371.3 L340.1,375.8 L333.1,386.5 L331.8,383.9 L330.5,381.2 L329.0,378.5 L327.4,376.0 L325.7,373.5 L324.0,371.1 L322.3,368.6 L320.5,366.2 L319.9,367.4 L322.1,363.3 L323.9,359.4 L325.6,355.4 L327.1,351.2 L328.6,346.9 L330.1,342.4 Z" fill="url(#wgl9)"/><path d="M320.5,366.2 L322.3,368.6 L324.0,371.1 L325.7,373.5 L327.4,376.0 L329.0,378.5 L330.5,381.2 L331.8,383.9 L333.1,386.5 L335.1,383.9 L332.4,387.4 L329.3,390.8 L326.0,393.9 L322.4,396.9 L318.4,399.7 L313.5,402.3 L299.0,409.1 L299.6,407.4 L300.0,405.6 L300.3,403.6 L300.4,401.5 L300.4,399.6 L300.2,397.6 L299.7,395.5 L299.1,393.3 L296.4,395.6 L299.9,392.6 L303.2,389.3 L306.3,385.9 L309.4,382.4 L312.3,378.7 L315.1,375.0 Z" fill="url(#wgl10)"/><path d="M299.1,393.3 L299.7,395.5 L300.2,397.6 L300.4,399.6 L300.4,401.5 L300.3,403.6 L300.0,405.6 L299.6,407.4 L299.0,409.1 L304.7,406.2 L301.5,407.8 L298.4,409.4 L295.6,410.8 L293.1,412.1 L290.9,413.2 L289.0,414.2 L287.5,415.0 L287.0,414.8 L286.4,414.6 L285.9,414.3 L285.4,414.1 L284.8,413.9 L284.3,413.6 L283.7,413.4 L283.2,413.2 L283.8,412.0 L284.5,410.6 L285.3,408.9 L286.2,407.1 L287.4,405.0 L288.8,402.9 L290.6,400.6 Z" fill="url(#wgl11)"/><path d="M356.0,256.0 L356.0,256.0 L356.0,256.0 L356.0,256.0 L356.0,256.0 L356.0,256.0 L356.0,256.0 L356.0,256.0 L356.0,256.0 L356.9,261.1 L358.2,268.1 L359.7,276.4 L361.2,285.3 L362.4,294.2 L363.2,302.2 L363.5,310.2 L363.5,324.8 L362.1,322.6 L360.7,320.5 L359.5,318.3 L358.3,316.2 L357.2,314.1 L356.1,312.0 L355.1,309.9 L354.2,307.8 L354.4,306.3 L355.5,298.7 L356.1,291.2 L356.4,283.0 L356.4,274.8 L356.2,267.1 L356.1,260.7 Z" fill="url(#wgl12)"/><path d="M354.2,307.8 L355.1,309.9 L356.1,312.0 L357.2,314.1 L358.3,316.2 L359.5,318.3 L360.7,320.5 L362.1,322.6 L363.5,324.8 L363.5,324.1 L363.4,329.8 L363.2,335.4 L363.1,340.8 L363.0,346.3 L363.2,352.6 L363.5,358.8 L363.9,371.2 L361.5,368.7 L359.2,366.2 L356.8,363.7 L354.6,361.2 L352.3,358.8 L350.1,356.4 L348.0,353.9 L346.0,351.6 L345.9,352.2 L346.6,346.6 L347.4,340.8 L348.4,335.7 L349.6,330.5 L350.7,325.1 L351.9,319.6 Z" fill="url(#wgl13)"/><path d="M346.0,351.6 L348.0,353.9 L350.1,356.4 L352.3,358.8 L354.6,361.2 L356.8,363.7 L359.2,366.2 L361.5,368.7 L363.9,371.2 L364.0,369.9 L363.7,374.7 L362.9,379.3 L361.2,384.0 L358.6,389.2 L355.3,394.0 L351.3,398.3 L338.8,406.6 L338.4,404.6 L337.8,402.5 L337.1,400.3 L336.2,398.1 L335.2,395.8 L334.1,393.3 L332.9,390.8 L331.6,388.3 L330.5,389.5 L334.5,384.8 L337.7,380.0 L340.3,375.3 L342.2,371.0 L343.5,366.7 L344.5,362.3 Z" fill="url(#wgl14)"/><path d="M331.6,388.3 L332.9,390.8 L334.1,393.3 L335.2,395.8 L336.2,398.1 L337.1,400.3 L337.8,402.5 L338.4,404.6 L338.8,406.6 L341.7,405.1 L336.0,407.7 L328.7,409.9 L320.4,411.9 L311.8,413.5 L303.7,414.9 L296.8,416.1 L292.0,417.0 L291.4,416.8 L290.9,416.5 L290.3,416.3 L289.8,416.0 L289.2,415.8 L288.6,415.5 L288.1,415.3 L287.5,415.0 L290.5,413.4 L294.6,411.3 L299.6,408.8 L305.4,405.9 L311.5,403.2 L317.2,400.4 L321.9,397.3 Z" fill="url(#wgl15)"/><path d="M356.0,256.0 L356.0,256.0 L356.0,256.0 L356.0,256.0 L356.0,256.0 L356.0,256.0 L356.0,256.0 L356.0,256.0 L356.0,256.0 L353.5,262.8 L349.8,272.7 L345.3,283.6 L340.2,294.2 L334.1,305.1 L327.3,316.3 L320.7,327.0 L311.8,342.3 L311.0,340.5 L310.1,338.6 L309.4,336.8 L308.7,335.0 L308.0,333.3 L307.4,331.5 L306.9,329.8 L306.4,328.1 L310.1,323.3 L318.3,312.9 L326.7,302.1 L334.5,291.6 L341.2,281.6 L347.3,271.4 L352.4,262.3 Z" fill="none" stroke="#6a4e33" stroke-width="1.2" stroke-linejoin="round"/><path d="M306.4,328.1 L306.9,329.8 L307.4,331.5 L308.0,333.3 L308.7,335.0 L309.4,336.8 L310.1,338.6 L311.0,340.5 L311.8,342.3 L312.1,341.8 L309.6,346.2 L307.0,350.4 L304.4,354.6 L301.7,358.7 L299.0,363.0 L295.3,368.4 L286.0,381.4 L285.4,379.0 L284.8,376.6 L284.1,374.1 L283.5,371.5 L282.8,369.0 L282.2,366.4 L281.6,363.8 L280.9,361.1 L280.4,361.9 L284.0,356.5 L286.8,352.6 L289.7,348.7 L292.8,344.9 L296.0,340.9 L299.3,336.9 Z" fill="none" stroke="#6a4e33" stroke-width="1.2" stroke-linejoin="round"/><path d="M280.9,361.1 L281.6,363.8 L282.2,366.4 L282.8,369.0 L283.5,371.5 L284.1,374.1 L284.8,376.6 L285.4,379.0 L286.0,381.4 L287.4,379.5 L284.1,384.1 L281.1,388.5 L278.4,392.6 L277.1,398.3 L277.5,403.6 L278.5,408.2 L279.2,411.4 L278.8,411.2 L278.4,411.1 L278.0,410.9 L277.6,410.7 L277.2,410.5 L276.8,410.4 L276.4,410.2 L276.0,410.0 L273.8,406.2 L270.5,400.9 L267.7,394.6 L267.0,388.0 L268.1,383.5 L270.1,378.7 L272.9,373.6 Z" fill="none" stroke="#6a4e33" stroke-width="1.2" stroke-linejoin="round"/><path d="M356.0,256.0 L356.0,256.0 L356.0,256.0 L356.0,256.0 L356.0,256.0 L356.0,256.0 L356.0,256.0 L356.0,256.0 L356.0,256.0 L355.1,261.0 L354.0,268.1 L352.6,276.4 L350.8,285.1 L348.7,293.4 L346.0,301.5 L342.9,309.9 L337.0,324.2 L336.1,322.3 L335.3,320.3 L334.6,318.3 L334.0,316.3 L333.4,314.4 L332.9,312.4 L332.4,310.5 L332.0,308.6 L333.5,306.1 L338.1,298.1 L342.2,290.4 L345.8,282.6 L349.1,274.6 L351.9,267.0 L354.3,260.6 Z" fill="none" stroke="#6a4e33" stroke-width="1.2" stroke-linejoin="round"/><path d="M332.0,308.6 L332.4,310.5 L332.9,312.4 L333.4,314.4 L334.0,316.3 L334.6,318.3 L335.3,320.3 L336.1,322.3 L337.0,324.2 L337.5,323.0 L335.6,327.5 L333.8,331.9 L332.2,336.2 L330.6,340.8 L329.1,345.3 L327.7,349.6 L324.1,359.1 L322.4,356.9 L320.7,354.8 L319.1,352.6 L317.5,350.5 L316.0,348.4 L314.6,346.4 L313.2,344.3 L311.8,342.3 L311.2,343.4 L313.5,339.5 L315.8,335.4 L318.1,331.3 L320.6,327.2 L323.1,323.0 L325.8,318.7 Z" fill="none" stroke="#6a4e33" stroke-width="1.2" stroke-linejoin="round"/><path d="M311.8,342.3 L313.2,344.3 L314.6,346.4 L316.0,348.4 L317.5,350.5 L319.1,352.6 L320.7,354.8 L322.4,356.9 L324.1,359.1 L324.5,358.0 L322.8,361.9 L320.7,365.8 L318.3,370.1 L315.4,374.5 L311.6,379.7 L307.5,384.6 L297.3,394.8 L296.8,392.7 L296.1,390.5 L295.2,388.2 L294.3,385.8 L293.3,383.4 L292.3,380.8 L291.2,378.3 L290.2,375.6 L289.1,377.1 L293.0,371.7 L296.8,366.2 L299.6,362.0 L302.1,358.2 L304.4,354.6 L306.7,350.9 Z" fill="none" stroke="#6a4e33" stroke-width="1.2" stroke-linejoin="round"/><path d="M290.2,375.6 L291.2,378.3 L292.3,380.8 L293.3,383.4 L294.3,385.8 L295.2,388.2 L296.1,390.5 L296.8,392.7 L297.3,394.8 L299.9,392.6 L296.4,395.6 L292.7,398.4 L289.5,402.0 L287.1,405.4 L285.4,408.6 L284.2,411.2 L283.2,413.2 L282.7,412.9 L282.2,412.7 L281.7,412.5 L281.2,412.3 L280.7,412.1 L280.2,411.8 L279.7,411.6 L279.2,411.4 L278.7,408.9 L277.9,405.6 L277.2,401.5 L277.2,397.1 L278.4,392.6 L280.5,389.4 L282.9,385.9 Z" fill="none" stroke="#6a4e33" stroke-width="1.2" stroke-linejoin="round"/><path d="M356.0,256.0 L356.0,256.0 L356.0,256.0 L356.0,256.0 L356.0,256.0 L356.0,256.0 L356.0,256.0 L356.0,256.0 L356.0,256.0 L356.0,259.9 L356.2,265.1 L356.3,271.4 L356.4,278.3 L356.3,285.4 L356.1,292.3 L355.5,298.7 L353.5,311.4 L352.6,309.3 L351.8,307.3 L351.0,305.3 L350.3,303.4 L349.7,301.4 L349.0,299.5 L348.5,297.6 L348.0,295.8 L348.1,295.4 L349.8,289.3 L351.3,282.9 L352.6,276.4 L353.7,270.1 L354.6,264.4 L355.4,259.5 Z" fill="none" stroke="#6a4e33" stroke-width="1.2" stroke-linejoin="round"/><path d="M348.0,295.8 L348.5,297.6 L349.0,299.5 L349.7,301.4 L350.3,303.4 L351.0,305.3 L351.8,307.3 L352.6,309.3 L353.5,311.4 L353.8,310.1 L352.8,314.9 L351.8,319.8 L350.8,324.6 L349.8,329.4 L348.8,334.0 L347.8,338.5 L346.2,349.8 L344.4,347.5 L342.6,345.2 L340.9,342.9 L339.3,340.7 L337.8,338.4 L336.3,336.3 L335.0,334.2 L333.7,332.3 L333.2,333.4 L335.0,329.1 L336.8,324.7 L338.7,320.1 L340.6,315.4 L342.5,310.8 L344.3,306.1 Z" fill="none" stroke="#6a4e33" stroke-width="1.2" stroke-linejoin="round"/><path d="M333.7,332.3 L335.0,334.2 L336.3,336.3 L337.8,338.4 L339.3,340.7 L340.9,342.9 L342.6,345.2 L344.4,347.5 L346.2,349.8 L346.4,348.4 L345.8,353.3 L345.2,358.1 L344.4,362.7 L343.4,367.1 L342.0,371.3 L340.1,375.8 L333.1,386.5 L331.8,383.9 L330.5,381.2 L329.0,378.5 L327.4,376.0 L325.7,373.5 L324.0,371.1 L322.3,368.6 L320.5,366.2 L319.9,367.4 L322.1,363.3 L323.9,359.4 L325.6,355.4 L327.1,351.2 L328.6,346.9 L330.1,342.4 Z" fill="none" stroke="#6a4e33" stroke-width="1.2" stroke-linejoin="round"/><path d="M320.5,366.2 L322.3,368.6 L324.0,371.1 L325.7,373.5 L327.4,376.0 L329.0,378.5 L330.5,381.2 L331.8,383.9 L333.1,386.5 L335.1,383.9 L332.4,387.4 L329.3,390.8 L326.0,393.9 L322.4,396.9 L318.4,399.7 L313.5,402.3 L299.0,409.1 L299.6,407.4 L300.0,405.6 L300.3,403.6 L300.4,401.5 L300.4,399.6 L300.2,397.6 L299.7,395.5 L299.1,393.3 L296.4,395.6 L299.9,392.6 L303.2,389.3 L306.3,385.9 L309.4,382.4 L312.3,378.7 L315.1,375.0 Z" fill="none" stroke="#6a4e33" stroke-width="1.2" stroke-linejoin="round"/><path d="M299.1,393.3 L299.7,395.5 L300.2,397.6 L300.4,399.6 L300.4,401.5 L300.3,403.6 L300.0,405.6 L299.6,407.4 L299.0,409.1 L304.7,406.2 L301.5,407.8 L298.4,409.4 L295.6,410.8 L293.1,412.1 L290.9,413.2 L289.0,414.2 L287.5,415.0 L287.0,414.8 L286.4,414.6 L285.9,414.3 L285.4,414.1 L284.8,413.9 L284.3,413.6 L283.7,413.4 L283.2,413.2 L283.8,412.0 L284.5,410.6 L285.3,408.9 L286.2,407.1 L287.4,405.0 L288.8,402.9 L290.6,400.6 Z" fill="none" stroke="#6a4e33" stroke-width="1.2" stroke-linejoin="round"/><path d="M356.0,256.0 L356.0,256.0 L356.0,256.0 L356.0,256.0 L356.0,256.0 L356.0,256.0 L356.0,256.0 L356.0,256.0 L356.0,256.0 L356.9,261.1 L358.2,268.1 L359.7,276.4 L361.2,285.3 L362.4,294.2 L363.2,302.2 L363.5,310.2 L363.5,324.8 L362.1,322.6 L360.7,320.5 L359.5,318.3 L358.3,316.2 L357.2,314.1 L356.1,312.0 L355.1,309.9 L354.2,307.8 L354.4,306.3 L355.5,298.7 L356.1,291.2 L356.4,283.0 L356.4,274.8 L356.2,267.1 L356.1,260.7 Z" fill="none" stroke="#6a4e33" stroke-width="1.2" stroke-linejoin="round"/><path d="M354.2,307.8 L355.1,309.9 L356.1,312.0 L357.2,314.1 L358.3,316.2 L359.5,318.3 L360.7,320.5 L362.1,322.6 L363.5,324.8 L363.5,324.1 L363.4,329.8 L363.2,335.4 L363.1,340.8 L363.0,346.3 L363.2,352.6 L363.5,358.8 L363.9,371.2 L361.5,368.7 L359.2,366.2 L356.8,363.7 L354.6,361.2 L352.3,358.8 L350.1,356.4 L348.0,353.9 L346.0,351.6 L345.9,352.2 L346.6,346.6 L347.4,340.8 L348.4,335.7 L349.6,330.5 L350.7,325.1 L351.9,319.6 Z" fill="none" stroke="#6a4e33" stroke-width="1.2" stroke-linejoin="round"/><path d="M346.0,351.6 L348.0,353.9 L350.1,356.4 L352.3,358.8 L354.6,361.2 L356.8,363.7 L359.2,366.2 L361.5,368.7 L363.9,371.2 L364.0,369.9 L363.7,374.7 L362.9,379.3 L361.2,384.0 L358.6,389.2 L355.3,394.0 L351.3,398.3 L338.8,406.6 L338.4,404.6 L337.8,402.5 L337.1,400.3 L336.2,398.1 L335.2,395.8 L334.1,393.3 L332.9,390.8 L331.6,388.3 L330.5,389.5 L334.5,384.8 L337.7,380.0 L340.3,375.3 L342.2,371.0 L343.5,366.7 L344.5,362.3 Z" fill="none" stroke="#6a4e33" stroke-width="1.2" stroke-linejoin="round"/><path d="M331.6,388.3 L332.9,390.8 L334.1,393.3 L335.2,395.8 L336.2,398.1 L337.1,400.3 L337.8,402.5 L338.4,404.6 L338.8,406.6 L341.7,405.1 L336.0,407.7 L328.7,409.9 L320.4,411.9 L311.8,413.5 L303.7,414.9 L296.8,416.1 L292.0,417.0 L291.4,416.8 L290.9,416.5 L290.3,416.3 L289.8,416.0 L289.2,415.8 L288.6,415.5 L288.1,415.3 L287.5,415.0 L290.5,413.4 L294.6,411.3 L299.6,408.8 L305.4,405.9 L311.5,403.2 L317.2,400.4 L321.9,397.3 Z" fill="none" stroke="#6a4e33" stroke-width="1.2" stroke-linejoin="round"/></g>
<path d="M356,256 C350,270 330,298 299,338 C286,356 270,374 266,392 C264,404 272,414 288,416 C310,418 336,412 352,402 C360,396 363,390 363,378 L363,300 C363,280 361,266 356,256 Z" fill="none" stroke="#6a4e33" stroke-width="1.6"/>
<g clip-path="url(#wr)"><path d="M448,257 C456,268 470,292 490,326 C502,346 518,372 526,396 C530,412 524,426 508,426 C486,425 462,414 448,402 C438,394 434,388 434,376 L434,300 C434,282 440,266 448,257 Z" fill="#b39577"/><defs><linearGradient id="wgr0" gradientUnits="userSpaceOnUse" x1="468.2" y1="289.6" x2="461.2" y2="293.2"><stop offset="0" stop-color="#9a7b5f"/><stop offset="0.45" stop-color="#d8c6b2"/><stop offset="0.75" stop-color="#f3ece4"/><stop offset="1" stop-color="#c2a68a"/></linearGradient><linearGradient id="wgr1" gradientUnits="userSpaceOnUse" x1="503.8" y1="350.1" x2="490.3" y2="357.3"><stop offset="0" stop-color="#9a7b5f"/><stop offset="0.45" stop-color="#d8c6b2"/><stop offset="0.75" stop-color="#f3ece4"/><stop offset="1" stop-color="#c2a68a"/></linearGradient><linearGradient id="wgr2" gradientUnits="userSpaceOnUse" x1="524.0" y1="392.0" x2="514.2" y2="397.2"><stop offset="0" stop-color="#9a7b5f"/><stop offset="0.45" stop-color="#d8c6b2"/><stop offset="0.75" stop-color="#f3ece4"/><stop offset="1" stop-color="#c2a68a"/></linearGradient><linearGradient id="wgr3" gradientUnits="userSpaceOnUse" x1="456.6" y1="281.9" x2="450.2" y2="285.4"><stop offset="0" stop-color="#9a7b5f"/><stop offset="0.45" stop-color="#d8c6b2"/><stop offset="0.75" stop-color="#f3ece4"/><stop offset="1" stop-color="#c2a68a"/></linearGradient><linearGradient id="wgr4" gradientUnits="userSpaceOnUse" x1="479.5" y1="332.0" x2="465.3" y2="337.7"><stop offset="0" stop-color="#9a7b5f"/><stop offset="0.45" stop-color="#d8c6b2"/><stop offset="0.75" stop-color="#f3ece4"/><stop offset="1" stop-color="#c2a68a"/></linearGradient><linearGradient id="wgr5" gradientUnits="userSpaceOnUse" x1="494.4" y1="365.1" x2="477.8" y2="374.7"><stop offset="0" stop-color="#9a7b5f"/><stop offset="0.45" stop-color="#d8c6b2"/><stop offset="0.75" stop-color="#f3ece4"/><stop offset="1" stop-color="#c2a68a"/></linearGradient><linearGradient id="wgr6" gradientUnits="userSpaceOnUse" x1="515.2" y1="402.4" x2="504.5" y2="407.8"><stop offset="0" stop-color="#9a7b5f"/><stop offset="0.45" stop-color="#d8c6b2"/><stop offset="0.75" stop-color="#f3ece4"/><stop offset="1" stop-color="#c2a68a"/></linearGradient><linearGradient id="wgr7" gradientUnits="userSpaceOnUse" x1="449.3" y1="276.8" x2="444.4" y2="279.6"><stop offset="0" stop-color="#9a7b5f"/><stop offset="0.45" stop-color="#d8c6b2"/><stop offset="0.75" stop-color="#f3ece4"/><stop offset="1" stop-color="#c2a68a"/></linearGradient><linearGradient id="wgr8" gradientUnits="userSpaceOnUse" x1="459.7" y1="320.8" x2="446.7" y2="326.3"><stop offset="0" stop-color="#9a7b5f"/><stop offset="0.45" stop-color="#d8c6b2"/><stop offset="0.75" stop-color="#f3ece4"/><stop offset="1" stop-color="#c2a68a"/></linearGradient><linearGradient id="wgr9" gradientUnits="userSpaceOnUse" x1="471.0" y1="358.9" x2="453.3" y2="367.7"><stop offset="0" stop-color="#9a7b5f"/><stop offset="0.45" stop-color="#d8c6b2"/><stop offset="0.75" stop-color="#f3ece4"/><stop offset="1" stop-color="#c2a68a"/></linearGradient><linearGradient id="wgr10" gradientUnits="userSpaceOnUse" x1="489.9" y1="390.3" x2="473.2" y2="399.2"><stop offset="0" stop-color="#9a7b5f"/><stop offset="0.45" stop-color="#d8c6b2"/><stop offset="0.75" stop-color="#f3ece4"/><stop offset="1" stop-color="#c2a68a"/></linearGradient><linearGradient id="wgr11" gradientUnits="userSpaceOnUse" x1="506.8" y1="414.1" x2="498.4" y2="418.3"><stop offset="0" stop-color="#9a7b5f"/><stop offset="0.45" stop-color="#d8c6b2"/><stop offset="0.75" stop-color="#f3ece4"/><stop offset="1" stop-color="#c2a68a"/></linearGradient><linearGradient id="wgr12" gradientUnits="userSpaceOnUse" x1="443.8" y1="284.4" x2="437.6" y2="287.8"><stop offset="0" stop-color="#9a7b5f"/><stop offset="0.45" stop-color="#d8c6b2"/><stop offset="0.75" stop-color="#f3ece4"/><stop offset="1" stop-color="#c2a68a"/></linearGradient><linearGradient id="wgr13" gradientUnits="userSpaceOnUse" x1="448.9" y1="337.6" x2="433.8" y2="343.6"><stop offset="0" stop-color="#9a7b5f"/><stop offset="0.45" stop-color="#d8c6b2"/><stop offset="0.75" stop-color="#f3ece4"/><stop offset="1" stop-color="#c2a68a"/></linearGradient><linearGradient id="wgr14" gradientUnits="userSpaceOnUse" x1="457.8" y1="381.6" x2="439.0" y2="392.1"><stop offset="0" stop-color="#9a7b5f"/><stop offset="0.45" stop-color="#d8c6b2"/><stop offset="0.75" stop-color="#f3ece4"/><stop offset="1" stop-color="#c2a68a"/></linearGradient><linearGradient id="wgr15" gradientUnits="userSpaceOnUse" x1="490.9" y1="412.2" x2="478.0" y2="418.8"><stop offset="0" stop-color="#9a7b5f"/><stop offset="0.45" stop-color="#d8c6b2"/><stop offset="0.75" stop-color="#f3ece4"/><stop offset="1" stop-color="#c2a68a"/></linearGradient></defs><path d="M448.0,257.0 L448.0,257.0 L448.0,257.0 L448.0,257.0 L448.0,257.0 L448.0,257.0 L448.0,257.0 L448.0,257.0 L448.0,257.0 L450.1,263.3 L453.2,272.4 L457.0,282.8 L461.2,293.2 L466.4,304.4 L472.0,316.1 L477.4,327.5 L484.5,343.9 L485.4,341.8 L486.4,339.8 L487.3,337.8 L488.2,335.8 L489.0,333.9 L489.8,332.0 L490.6,330.1 L491.3,328.2 L488.3,323.2 L481.7,312.0 L474.8,300.5 L468.2,289.6 L462.3,279.9 L456.5,270.6 L451.5,262.6 Z" fill="url(#wgr0)"/><path d="M491.3,328.2 L490.6,330.1 L489.8,332.0 L489.0,333.9 L488.2,335.8 L487.3,337.8 L486.4,339.8 L485.4,341.8 L484.5,343.9 L484.2,343.3 L486.2,348.1 L488.2,352.7 L490.3,357.3 L492.5,361.7 L495.0,366.1 L498.4,371.7 L507.2,385.0 L507.6,382.4 L508.0,379.9 L508.4,377.2 L508.9,374.5 L509.3,371.8 L509.7,369.0 L510.2,366.2 L510.8,363.3 L511.2,364.1 L508.1,358.4 L506.0,354.2 L503.8,350.1 L501.5,346.0 L499.1,341.8 L496.7,337.6 Z" fill="url(#wgr1)"/><path d="M510.8,363.3 L510.2,366.2 L509.7,369.0 L509.3,371.8 L508.9,374.5 L508.4,377.2 L508.0,379.9 L507.6,382.4 L507.2,385.0 L505.9,383.0 L509.1,387.9 L511.9,392.6 L514.2,397.2 L515.2,403.7 L514.7,410.1 L513.5,415.7 L512.8,419.6 L513.2,419.4 L513.6,419.2 L514.0,419.0 L514.4,418.8 L514.8,418.6 L515.2,418.4 L515.6,418.2 L516.0,418.0 L518.0,413.5 L520.9,407.0 L523.4,399.5 L524.0,392.0 L522.9,387.0 L520.9,381.9 L518.2,376.5 Z" fill="url(#wgr2)"/><path d="M448.0,257.0 L448.0,257.0 L448.0,257.0 L448.0,257.0 L448.0,257.0 L448.0,257.0 L448.0,257.0 L448.0,257.0 L448.0,257.0 L448.3,261.9 L448.7,268.8 L449.3,276.8 L450.2,285.4 L451.6,293.6 L453.6,301.8 L456.2,310.4 L461.2,325.1 L462.2,323.0 L463.2,320.8 L464.2,318.7 L465.1,316.5 L465.9,314.4 L466.7,312.2 L467.4,310.1 L468.1,308.0 L466.9,305.4 L463.0,297.1 L459.6,289.4 L456.6,281.9 L453.9,274.3 L451.4,267.2 L449.5,261.3 Z" fill="url(#wgr3)"/><path d="M468.1,308.0 L467.4,310.1 L466.7,312.2 L465.9,314.4 L465.1,316.5 L464.2,318.7 L463.2,320.8 L462.2,323.0 L461.2,325.1 L460.8,323.8 L462.4,328.5 L463.9,333.1 L465.3,337.7 L466.6,342.7 L467.9,347.6 L469.2,352.5 L472.3,363.0 L473.9,360.5 L475.5,358.1 L477.0,355.6 L478.6,353.2 L480.1,350.8 L481.6,348.5 L483.0,346.2 L484.5,343.9 L484.9,345.0 L483.2,340.8 L481.4,336.4 L479.5,332.0 L477.5,327.7 L475.4,323.2 L473.2,318.6 Z" fill="url(#wgr4)"/><path d="M484.5,343.9 L483.0,346.2 L481.6,348.5 L480.1,350.8 L478.6,353.2 L477.0,355.6 L475.5,358.1 L473.9,360.5 L472.3,363.0 L471.9,361.8 L473.5,366.2 L475.3,370.3 L477.8,374.7 L480.7,379.0 L484.6,384.1 L488.7,389.0 L498.2,399.6 L498.6,397.3 L499.1,394.8 L499.7,392.4 L500.4,389.8 L501.1,387.2 L501.8,384.6 L502.5,381.8 L503.2,379.0 L504.3,380.5 L500.5,375.0 L496.9,369.4 L494.4,365.1 L492.2,361.1 L490.3,357.3 L488.5,353.3 Z" fill="url(#wgr5)"/><path d="M503.2,379.0 L502.5,381.8 L501.8,384.6 L501.1,387.2 L500.4,389.8 L499.7,392.4 L499.1,394.8 L498.6,397.3 L498.2,399.6 L495.9,397.1 L498.9,400.4 L502.0,403.6 L504.5,407.8 L506.2,412.1 L507.4,415.9 L508.1,419.2 L508.8,421.6 L509.3,421.4 L509.8,421.1 L510.3,420.9 L510.8,420.6 L511.3,420.4 L511.8,420.1 L512.3,419.9 L512.8,419.6 L513.3,416.6 L514.2,412.5 L515.0,407.6 L515.2,402.4 L514.2,397.2 L512.4,393.5 L510.2,389.8 Z" fill="url(#wgr6)"/><path d="M448.0,257.0 L448.0,257.0 L448.0,257.0 L448.0,257.0 L448.0,257.0 L448.0,257.0 L448.0,257.0 L448.0,257.0 L448.0,257.0 L447.4,260.9 L446.5,266.3 L445.4,272.6 L444.4,279.6 L443.5,286.8 L443.0,293.8 L443.0,300.4 L444.3,313.0 L445.5,310.8 L446.5,308.7 L447.6,306.5 L448.6,304.3 L449.5,302.2 L450.4,300.1 L451.3,298.1 L452.1,296.0 L452.0,295.6 L450.8,289.6 L449.9,283.2 L449.3,276.8 L448.8,270.7 L448.5,265.1 L448.3,260.5 Z" fill="url(#wgr7)"/><path d="M452.1,296.0 L451.3,298.1 L450.4,300.1 L449.5,302.2 L448.6,304.3 L447.6,306.5 L446.5,308.7 L445.5,310.8 L444.3,313.0 L444.1,311.7 L444.9,316.6 L445.7,321.5 L446.7,326.3 L447.6,331.2 L448.6,335.9 L449.5,340.6 L451.2,352.9 L453.0,350.3 L454.7,347.7 L456.4,345.2 L458.0,342.7 L459.6,340.2 L461.1,337.8 L462.6,335.6 L464.0,333.5 L464.4,334.7 L462.9,330.2 L461.3,325.5 L459.7,320.8 L458.1,316.0 L456.5,311.2 L455.0,306.5 Z" fill="url(#wgr8)"/><path d="M464.0,333.5 L462.6,335.6 L461.1,337.8 L459.6,340.2 L458.0,342.7 L456.4,345.2 L454.7,347.7 L453.0,350.3 L451.2,352.9 L451.0,351.4 L451.7,357.0 L452.4,362.4 L453.3,367.7 L454.4,372.8 L455.9,377.4 L458.1,382.1 L465.8,392.3 L466.7,389.6 L467.6,386.8 L468.6,384.0 L469.9,381.4 L471.2,378.8 L472.6,376.1 L474.0,373.4 L475.6,370.7 L476.2,371.9 L474.1,367.7 L472.5,363.4 L471.0,358.9 L469.6,354.2 L468.4,349.4 L467.1,344.5 Z" fill="url(#wgr9)"/><path d="M475.6,370.7 L474.0,373.4 L472.6,376.1 L471.2,378.8 L469.9,381.4 L468.6,384.0 L467.6,386.8 L466.7,389.6 L465.8,392.3 L463.6,389.9 L466.6,393.1 L469.8,396.2 L473.2,399.2 L476.7,402.1 L480.3,405.0 L484.4,407.8 L495.8,416.1 L495.6,414.0 L495.4,411.8 L495.4,409.5 L495.4,407.1 L495.5,404.9 L495.7,402.7 L496.1,400.3 L496.6,397.9 L498.9,400.4 L495.9,397.1 L492.9,393.7 L489.9,390.3 L486.8,386.8 L483.9,383.2 L481.1,379.5 Z" fill="url(#wgr10)"/><path d="M496.6,397.9 L496.1,400.3 L495.7,402.7 L495.5,404.9 L495.4,407.1 L495.4,409.5 L495.4,411.8 L495.6,414.0 L495.8,416.1 L491.4,412.6 L494.0,414.5 L496.3,416.5 L498.4,418.3 L500.3,420.0 L501.9,421.5 L503.3,422.7 L504.5,423.8 L505.0,423.5 L505.6,423.2 L506.1,423.0 L506.6,422.7 L507.2,422.4 L507.7,422.1 L508.3,421.9 L508.8,421.6 L508.4,420.2 L508.0,418.5 L507.5,416.4 L506.8,414.1 L506.1,411.5 L505.0,408.9 L503.7,406.2 Z" fill="url(#wgr11)"/><path d="M448.0,257.0 L448.0,257.0 L448.0,257.0 L448.0,257.0 L448.0,257.0 L448.0,257.0 L448.0,257.0 L448.0,257.0 L448.0,257.0 L446.2,262.3 L443.6,269.7 L440.6,278.5 L437.6,287.8 L435.2,297.0 L433.7,305.3 L433.0,313.3 L432.9,327.6 L434.5,325.3 L435.9,323.0 L437.4,320.7 L438.8,318.5 L440.1,316.2 L441.4,314.0 L442.6,311.7 L443.8,309.5 L443.6,308.0 L443.0,300.4 L443.1,292.7 L443.8,284.4 L444.9,276.1 L446.1,268.3 L447.3,261.7 Z" fill="url(#wgr12)"/><path d="M443.8,309.5 L442.6,311.7 L441.4,314.0 L440.1,316.2 L438.8,318.5 L437.4,320.7 L435.9,323.0 L434.5,325.3 L432.9,327.6 L432.9,326.9 L433.1,332.5 L433.5,338.1 L433.8,343.6 L434.1,349.4 L434.2,356.3 L434.3,363.4 L435.1,377.9 L437.2,375.0 L439.3,372.0 L441.3,369.1 L443.4,366.2 L445.5,363.3 L447.5,360.5 L449.5,357.7 L451.4,355.0 L451.5,355.7 L450.7,349.4 L449.9,343.1 L448.9,337.6 L447.8,332.2 L446.8,326.8 L445.7,321.2 Z" fill="url(#wgr13)"/><path d="M451.4,355.0 L449.5,357.7 L447.5,360.5 L445.5,363.3 L443.4,366.2 L441.3,369.1 L439.3,372.0 L437.2,375.0 L435.1,377.9 L434.9,376.4 L435.7,382.0 L436.9,387.1 L439.0,392.1 L442.3,397.1 L446.3,401.4 L450.9,405.1 L463.1,412.6 L463.3,410.5 L463.7,408.3 L464.1,406.1 L464.6,403.8 L465.2,401.5 L465.9,399.0 L466.6,396.5 L467.4,393.9 L468.6,395.1 L464.3,390.7 L460.7,386.2 L457.8,381.6 L455.8,377.0 L454.3,372.3 L453.2,367.3 Z" fill="url(#wgr14)"/><path d="M467.4,393.9 L466.6,396.5 L465.9,399.0 L465.2,401.5 L464.6,403.8 L464.1,406.1 L463.7,408.3 L463.3,410.5 L463.1,412.6 L460.5,411.1 L465.4,413.8 L471.4,416.4 L478.0,418.8 L484.7,421.1 L491.0,423.1 L496.2,424.7 L500.0,426.0 L500.6,425.7 L501.1,425.4 L501.7,425.2 L502.2,424.9 L502.8,424.6 L503.4,424.3 L503.9,424.0 L504.5,423.8 L502.2,421.7 L499.2,419.0 L495.4,415.7 L490.9,412.2 L486.0,408.9 L481.3,405.7 L477.2,402.5 Z" fill="url(#wgr15)"/><path d="M448.0,257.0 L448.0,257.0 L448.0,257.0 L448.0,257.0 L448.0,257.0 L448.0,257.0 L448.0,257.0 L448.0,257.0 L448.0,257.0 L450.1,263.3 L453.2,272.4 L457.0,282.8 L461.2,293.2 L466.4,304.4 L472.0,316.1 L477.4,327.5 L484.5,343.9 L485.4,341.8 L486.4,339.8 L487.3,337.8 L488.2,335.8 L489.0,333.9 L489.8,332.0 L490.6,330.1 L491.3,328.2 L488.3,323.2 L481.7,312.0 L474.8,300.5 L468.2,289.6 L462.3,279.9 L456.5,270.6 L451.5,262.6 Z" fill="none" stroke="#6a4e33" stroke-width="1.2" stroke-linejoin="round"/><path d="M491.3,328.2 L490.6,330.1 L489.8,332.0 L489.0,333.9 L488.2,335.8 L487.3,337.8 L486.4,339.8 L485.4,341.8 L484.5,343.9 L484.2,343.3 L486.2,348.1 L488.2,352.7 L490.3,357.3 L492.5,361.7 L495.0,366.1 L498.4,371.7 L507.2,385.0 L507.6,382.4 L508.0,379.9 L508.4,377.2 L508.9,374.5 L509.3,371.8 L509.7,369.0 L510.2,366.2 L510.8,363.3 L511.2,364.1 L508.1,358.4 L506.0,354.2 L503.8,350.1 L501.5,346.0 L499.1,341.8 L496.7,337.6 Z" fill="none" stroke="#6a4e33" stroke-width="1.2" stroke-linejoin="round"/><path d="M510.8,363.3 L510.2,366.2 L509.7,369.0 L509.3,371.8 L508.9,374.5 L508.4,377.2 L508.0,379.9 L507.6,382.4 L507.2,385.0 L505.9,383.0 L509.1,387.9 L511.9,392.6 L514.2,397.2 L515.2,403.7 L514.7,410.1 L513.5,415.7 L512.8,419.6 L513.2,419.4 L513.6,419.2 L514.0,419.0 L514.4,418.8 L514.8,418.6 L515.2,418.4 L515.6,418.2 L516.0,418.0 L518.0,413.5 L520.9,407.0 L523.4,399.5 L524.0,392.0 L522.9,387.0 L520.9,381.9 L518.2,376.5 Z" fill="none" stroke="#6a4e33" stroke-width="1.2" stroke-linejoin="round"/><path d="M448.0,257.0 L448.0,257.0 L448.0,257.0 L448.0,257.0 L448.0,257.0 L448.0,257.0 L448.0,257.0 L448.0,257.0 L448.0,257.0 L448.3,261.9 L448.7,268.8 L449.3,276.8 L450.2,285.4 L451.6,293.6 L453.6,301.8 L456.2,310.4 L461.2,325.1 L462.2,323.0 L463.2,320.8 L464.2,318.7 L465.1,316.5 L465.9,314.4 L466.7,312.2 L467.4,310.1 L468.1,308.0 L466.9,305.4 L463.0,297.1 L459.6,289.4 L456.6,281.9 L453.9,274.3 L451.4,267.2 L449.5,261.3 Z" fill="none" stroke="#6a4e33" stroke-width="1.2" stroke-linejoin="round"/><path d="M468.1,308.0 L467.4,310.1 L466.7,312.2 L465.9,314.4 L465.1,316.5 L464.2,318.7 L463.2,320.8 L462.2,323.0 L461.2,325.1 L460.8,323.8 L462.4,328.5 L463.9,333.1 L465.3,337.7 L466.6,342.7 L467.9,347.6 L469.2,352.5 L472.3,363.0 L473.9,360.5 L475.5,358.1 L477.0,355.6 L478.6,353.2 L480.1,350.8 L481.6,348.5 L483.0,346.2 L484.5,343.9 L484.9,345.0 L483.2,340.8 L481.4,336.4 L479.5,332.0 L477.5,327.7 L475.4,323.2 L473.2,318.6 Z" fill="none" stroke="#6a4e33" stroke-width="1.2" stroke-linejoin="round"/><path d="M484.5,343.9 L483.0,346.2 L481.6,348.5 L480.1,350.8 L478.6,353.2 L477.0,355.6 L475.5,358.1 L473.9,360.5 L472.3,363.0 L471.9,361.8 L473.5,366.2 L475.3,370.3 L477.8,374.7 L480.7,379.0 L484.6,384.1 L488.7,389.0 L498.2,399.6 L498.6,397.3 L499.1,394.8 L499.7,392.4 L500.4,389.8 L501.1,387.2 L501.8,384.6 L502.5,381.8 L503.2,379.0 L504.3,380.5 L500.5,375.0 L496.9,369.4 L494.4,365.1 L492.2,361.1 L490.3,357.3 L488.5,353.3 Z" fill="none" stroke="#6a4e33" stroke-width="1.2" stroke-linejoin="round"/><path d="M503.2,379.0 L502.5,381.8 L501.8,384.6 L501.1,387.2 L500.4,389.8 L499.7,392.4 L499.1,394.8 L498.6,397.3 L498.2,399.6 L495.9,397.1 L498.9,400.4 L502.0,403.6 L504.5,407.8 L506.2,412.1 L507.4,415.9 L508.1,419.2 L508.8,421.6 L509.3,421.4 L509.8,421.1 L510.3,420.9 L510.8,420.6 L511.3,420.4 L511.8,420.1 L512.3,419.9 L512.8,419.6 L513.3,416.6 L514.2,412.5 L515.0,407.6 L515.2,402.4 L514.2,397.2 L512.4,393.5 L510.2,389.8 Z" fill="none" stroke="#6a4e33" stroke-width="1.2" stroke-linejoin="round"/><path d="M448.0,257.0 L448.0,257.0 L448.0,257.0 L448.0,257.0 L448.0,257.0 L448.0,257.0 L448.0,257.0 L448.0,257.0 L448.0,257.0 L447.4,260.9 L446.5,266.3 L445.4,272.6 L444.4,279.6 L443.5,286.8 L443.0,293.8 L443.0,300.4 L444.3,313.0 L445.5,310.8 L446.5,308.7 L447.6,306.5 L448.6,304.3 L449.5,302.2 L450.4,300.1 L451.3,298.1 L452.1,296.0 L452.0,295.6 L450.8,289.6 L449.9,283.2 L449.3,276.8 L448.8,270.7 L448.5,265.1 L448.3,260.5 Z" fill="none" stroke="#6a4e33" stroke-width="1.2" stroke-linejoin="round"/><path d="M452.1,296.0 L451.3,298.1 L450.4,300.1 L449.5,302.2 L448.6,304.3 L447.6,306.5 L446.5,308.7 L445.5,310.8 L444.3,313.0 L444.1,311.7 L444.9,316.6 L445.7,321.5 L446.7,326.3 L447.6,331.2 L448.6,335.9 L449.5,340.6 L451.2,352.9 L453.0,350.3 L454.7,347.7 L456.4,345.2 L458.0,342.7 L459.6,340.2 L461.1,337.8 L462.6,335.6 L464.0,333.5 L464.4,334.7 L462.9,330.2 L461.3,325.5 L459.7,320.8 L458.1,316.0 L456.5,311.2 L455.0,306.5 Z" fill="none" stroke="#6a4e33" stroke-width="1.2" stroke-linejoin="round"/><path d="M464.0,333.5 L462.6,335.6 L461.1,337.8 L459.6,340.2 L458.0,342.7 L456.4,345.2 L454.7,347.7 L453.0,350.3 L451.2,352.9 L451.0,351.4 L451.7,357.0 L452.4,362.4 L453.3,367.7 L454.4,372.8 L455.9,377.4 L458.1,382.1 L465.8,392.3 L466.7,389.6 L467.6,386.8 L468.6,384.0 L469.9,381.4 L471.2,378.8 L472.6,376.1 L474.0,373.4 L475.6,370.7 L476.2,371.9 L474.1,367.7 L472.5,363.4 L471.0,358.9 L469.6,354.2 L468.4,349.4 L467.1,344.5 Z" fill="none" stroke="#6a4e33" stroke-width="1.2" stroke-linejoin="round"/><path d="M475.6,370.7 L474.0,373.4 L472.6,376.1 L471.2,378.8 L469.9,381.4 L468.6,384.0 L467.6,386.8 L466.7,389.6 L465.8,392.3 L463.6,389.9 L466.6,393.1 L469.8,396.2 L473.2,399.2 L476.7,402.1 L480.3,405.0 L484.4,407.8 L495.8,416.1 L495.6,414.0 L495.4,411.8 L495.4,409.5 L495.4,407.1 L495.5,404.9 L495.7,402.7 L496.1,400.3 L496.6,397.9 L498.9,400.4 L495.9,397.1 L492.9,393.7 L489.9,390.3 L486.8,386.8 L483.9,383.2 L481.1,379.5 Z" fill="none" stroke="#6a4e33" stroke-width="1.2" stroke-linejoin="round"/><path d="M496.6,397.9 L496.1,400.3 L495.7,402.7 L495.5,404.9 L495.4,407.1 L495.4,409.5 L495.4,411.8 L495.6,414.0 L495.8,416.1 L491.4,412.6 L494.0,414.5 L496.3,416.5 L498.4,418.3 L500.3,420.0 L501.9,421.5 L503.3,422.7 L504.5,423.8 L505.0,423.5 L505.6,423.2 L506.1,423.0 L506.6,422.7 L507.2,422.4 L507.7,422.1 L508.3,421.9 L508.8,421.6 L508.4,420.2 L508.0,418.5 L507.5,416.4 L506.8,414.1 L506.1,411.5 L505.0,408.9 L503.7,406.2 Z" fill="none" stroke="#6a4e33" stroke-width="1.2" stroke-linejoin="round"/><path d="M448.0,257.0 L448.0,257.0 L448.0,257.0 L448.0,257.0 L448.0,257.0 L448.0,257.0 L448.0,257.0 L448.0,257.0 L448.0,257.0 L446.2,262.3 L443.6,269.7 L440.6,278.5 L437.6,287.8 L435.2,297.0 L433.7,305.3 L433.0,313.3 L432.9,327.6 L434.5,325.3 L435.9,323.0 L437.4,320.7 L438.8,318.5 L440.1,316.2 L441.4,314.0 L442.6,311.7 L443.8,309.5 L443.6,308.0 L443.0,300.4 L443.1,292.7 L443.8,284.4 L444.9,276.1 L446.1,268.3 L447.3,261.7 Z" fill="none" stroke="#6a4e33" stroke-width="1.2" stroke-linejoin="round"/><path d="M443.8,309.5 L442.6,311.7 L441.4,314.0 L440.1,316.2 L438.8,318.5 L437.4,320.7 L435.9,323.0 L434.5,325.3 L432.9,327.6 L432.9,326.9 L433.1,332.5 L433.5,338.1 L433.8,343.6 L434.1,349.4 L434.2,356.3 L434.3,363.4 L435.1,377.9 L437.2,375.0 L439.3,372.0 L441.3,369.1 L443.4,366.2 L445.5,363.3 L447.5,360.5 L449.5,357.7 L451.4,355.0 L451.5,355.7 L450.7,349.4 L449.9,343.1 L448.9,337.6 L447.8,332.2 L446.8,326.8 L445.7,321.2 Z" fill="none" stroke="#6a4e33" stroke-width="1.2" stroke-linejoin="round"/><path d="M451.4,355.0 L449.5,357.7 L447.5,360.5 L445.5,363.3 L443.4,366.2 L441.3,369.1 L439.3,372.0 L437.2,375.0 L435.1,377.9 L434.9,376.4 L435.7,382.0 L436.9,387.1 L439.0,392.1 L442.3,397.1 L446.3,401.4 L450.9,405.1 L463.1,412.6 L463.3,410.5 L463.7,408.3 L464.1,406.1 L464.6,403.8 L465.2,401.5 L465.9,399.0 L466.6,396.5 L467.4,393.9 L468.6,395.1 L464.3,390.7 L460.7,386.2 L457.8,381.6 L455.8,377.0 L454.3,372.3 L453.2,367.3 Z" fill="none" stroke="#6a4e33" stroke-width="1.2" stroke-linejoin="round"/><path d="M467.4,393.9 L466.6,396.5 L465.9,399.0 L465.2,401.5 L464.6,403.8 L464.1,406.1 L463.7,408.3 L463.3,410.5 L463.1,412.6 L460.5,411.1 L465.4,413.8 L471.4,416.4 L478.0,418.8 L484.7,421.1 L491.0,423.1 L496.2,424.7 L500.0,426.0 L500.6,425.7 L501.1,425.4 L501.7,425.2 L502.2,424.9 L502.8,424.6 L503.4,424.3 L503.9,424.0 L504.5,423.8 L502.2,421.7 L499.2,419.0 L495.4,415.7 L490.9,412.2 L486.0,408.9 L481.3,405.7 L477.2,402.5 Z" fill="none" stroke="#6a4e33" stroke-width="1.2" stroke-linejoin="round"/></g>
<path d="M448,257 C456,268 470,292 490,326 C502,346 518,372 526,396 C530,412 524,426 508,426 C486,425 462,414 448,402 C438,394 434,388 434,376 L434,300 C434,282 440,266 448,257 Z" fill="none" stroke="#6a4e33" stroke-width="1.6"/>
<g opacity="0.85"><path d="M86,485 C80,490 70,494 70,500 C72,504 78,503 84,501 C78,500 76,497 80,494 C83,491 86,489 86,485 Z" fill="#f4f4f4" stroke="#555" stroke-width="1.3"/>
<path d="M70,503 C76,499 86,498 94,502 C100,506 103,514 104,520 C104,526 99,530 92,529 C84,527 78,522 74,516 C72,512 70,507 70,503 Z" fill="#5a5a5a"/>
<path d="M84,500 C92,500 99,505 102,512 L101,519 C97,513 92,508 84,505 Z" fill="#d9534f"/>
<path d="M66,516 L77,508 L80,513 L70,517 Z" fill="#d9534f"/>
<path d="M107,499 C106,505 103,510 99,513 L97,510 C101,507 104,503 107,499 Z" fill="#eee" stroke="#666" stroke-width="0.8"/>
<path d="M86,511 L91,510 L89,514 Z" fill="#fff"/>
<ellipse cx="97" cy="523" rx="4.5" ry="3" fill="#f0f0f0" stroke="#444" stroke-width="1"/>
</g><text x="110" y="510" font-family="Liberation Sans" font-weight="bold" font-size="12.3" fill="#bcc7d2">Download Bull</text>
<text x="110" y="518" font-family="Liberation Serif" font-size="8" fill="#8f8f8f" textLength="64" lengthAdjust="spacingAndGlyphs">Free Software Store</text>
</svg>
<div class="a" style="left:800px;top:51px;width:224px;height:11px;background:#2a2a2a;"></div>
<svg class="a" style="left:820px;top:53px" width="10" height="7" viewBox="0 0 10 7"><path d="M0 3.5 L4 1 L4 6 Z M4.5 3.5 L8.5 1 L8.5 6 Z" fill="#b5b5b5"/></svg>
<svg class="a" style="left:1013px;top:53px" width="10" height="7" viewBox="0 0 10 7"><path d="M0 1 L4 3.5 L0 6 Z M4.5 1 L8.5 3.5 L4.5 6 Z" fill="#b5b5b5"/></svg>
<div class="a" style="left:786px;top:62px;width:14px;height:474px;background:#3b3b3b;"></div>
<div class="a" style="left:786px;top:62px;width:1px;height:474px;background:#2c2c2c;"></div>
<div class="a" style="left:798px;top:62px;width:2px;height:486px;background:#2d2d2d;"></div>
<div class="a" style="left:789px;top:72px;width:0;height:0;border-left:4px solid transparent;border-right:4px solid transparent;border-bottom:5px solid #e0e0e0"></div>
<div class="a" style="left:789px;top:526px;width:0;height:0;border-left:4px solid transparent;border-right:4px solid transparent;border-top:5px solid #e0e0e0"></div>
<div class="a" style="left:787px;top:295px;width:12px;height:13px;background:#a9a9a9;"></div>
<div class="a" style="left:800px;top:62px;width:33px;height:486px;background:#454545;"></div>
<div class="a" style="left:800px;top:62px;width:1px;height:486px;background:#353535;"></div>
<div class="a" style="left:831px;top:62px;width:3px;height:486px;background:#2e2e2e;"></div>
<div class="a" style="left:801px;top:140px;width:30px;height:2px;background:#363636;"></div>
<div class="a" style="left:801px;top:217px;width:30px;height:2px;background:#363636;"></div>
<div class="a" style="left:801px;top:290px;width:30px;height:2px;background:#363636;"></div>
<div class="a" style="left:801px;top:349px;width:30px;height:2px;background:#363636;"></div>
<div class="a" style="left:801px;top:427px;width:30px;height:2px;background:#363636;"></div>
<div class="a" style="left:808px;top:66px;width:16px;height:3px;background:#2a2a2a;background:repeating-linear-gradient(90deg,#252525 0 1px,#3a3a3a 1px 2px);"></div>
<div class="a" style="left:808px;top:143px;width:16px;height:3px;background:#2a2a2a;background:repeating-linear-gradient(90deg,#252525 0 1px,#3a3a3a 1px 2px);"></div>
<div class="a" style="left:808px;top:221px;width:16px;height:3px;background:#2a2a2a;background:repeating-linear-gradient(90deg,#252525 0 1px,#3a3a3a 1px 2px);"></div>
<div class="a" style="left:808px;top:297px;width:16px;height:3px;background:#2a2a2a;background:repeating-linear-gradient(90deg,#252525 0 1px,#3a3a3a 1px 2px);"></div>
<div class="a" style="left:808px;top:354px;width:16px;height:3px;background:#2a2a2a;background:repeating-linear-gradient(90deg,#252525 0 1px,#3a3a3a 1px 2px);"></div>
<svg class="a" style="left:800px;top:62px" width="34" height="400" viewBox="800 62 34 400"><g transform="translate(816 80) scale(0.82) translate(-816 -80)"><path d="M808 82 C807 75 814 72 820 73 C826 74 827 79 824 81 C821 82 823 85 820 87 C815 89 809 87 808 82 Z" fill="#cdcdcd"/><circle cx="812" cy="81" r="1.3" fill="#454545"/><circle cx="816" cy="84" r="1.3" fill="#454545"/><circle cx="814" cy="77" r="1.3" fill="#454545"/><circle cx="820" cy="76" r="1.3" fill="#454545"/></g><g transform="translate(816 103) scale(0.82) translate(-816 -103)"><defs><linearGradient id="dg" x1="0" y1="0" x2="1" y2="1"><stop offset="0" stop-color="#eee"/><stop offset="1" stop-color="#333"/></linearGradient></defs><path d="M810 95 L810 110 L825 110 C825 102 818 95 810 95 Z" fill="url(#dg)" stroke="#ccc" stroke-width="0.8"/></g><g transform="translate(816 127) scale(0.82) translate(-816 -127)"><circle cx="814" cy="127" r="5" fill="none" stroke="#cdcdcd" stroke-width="1.3"/><circle cx="814" cy="127" r="2.2" fill="#cdcdcd"/><circle cx="822" cy="119" r="2.2" fill="#cdcdcd"/><circle cx="822" cy="135" r="2.2" fill="#cdcdcd"/><path d="M817 124 L821 120 M817 130 L821 134" stroke="#cdcdcd"/></g><g transform="translate(816 157) scale(0.82) translate(-816 -157)"><rect x="809" y="152" width="15" height="11" fill="none" stroke="#cdcdcd" stroke-width="1.2"/><path d="M809 156 L824 156 M814 152 L814 163 M819 152 L819 163" stroke="#cdcdcd" stroke-width="0.8"/><rect x="810" y="153" width="3" height="2.5" fill="#222"/></g><g transform="translate(816 180) scale(0.82) translate(-816 -180)"><rect x="812" y="179" width="8" height="9" fill="#cdcdcd"/><path d="M813 179 L810 172 M816 179 L816 171 M819 179 L822 173" stroke="#cdcdcd" stroke-width="1.5"/></g><g transform="translate(816 203) scale(0.82) translate(-816 -203)"><circle cx="816" cy="198" r="3.5" fill="#cdcdcd"/><circle cx="812" cy="203" r="3.5" fill="#cdcdcd"/><circle cx="820" cy="203" r="3.5" fill="#cdcdcd"/><path d="M816 202 L816 208 M812 208 L820 208" stroke="#cdcdcd" stroke-width="1.3"/></g><g transform="translate(816 235) scale(0.82) translate(-816 -235)"><rect x="810" y="229" width="13" height="2" fill="#cdcdcd"/><rect x="810" y="234" width="13" height="2" fill="#cdcdcd"/><rect x="810" y="239" width="13" height="2.5" fill="#cdcdcd"/></g><g transform="translate(816 258) scale(0.82) translate(-816 -258)"><defs><linearGradient id="dg2" x1="0" x2="1"><stop offset="0" stop-color="#333"/><stop offset="1" stop-color="#ddd"/></linearGradient></defs><rect x="809" y="253" width="14" height="10" fill="url(#dg2)" stroke="#cdcdcd" stroke-width="1"/></g><g transform="translate(816 281) scale(0.82) translate(-816 -281)"><circle cx="815" cy="280" r="5.5" fill="#d0d0d0"/><circle cx="818" cy="283" r="5" fill="#666" stroke="#ccc" stroke-width="1"/></g><g transform="translate(816 313) scale(0.82) translate(-816 -313)"><circle cx="816" cy="313" r="6.5" fill="none" stroke="#bbb" stroke-width="1.5" stroke-dasharray="1.5 1"/><circle cx="816" cy="313" r="4" fill="#cdcdcd"/></g><g transform="translate(816 336) scale(0.82) translate(-816 -336)"><rect x="812" y="330" width="11" height="9" fill="none" stroke="#cdcdcd" stroke-width="1.3"/><rect x="809" y="335" width="7" height="6" fill="#454545" stroke="#cdcdcd" stroke-width="1.2"/></g><g transform="translate(816 368) scale(0.82) translate(-816 -368)"><path d="M818 362 L810 362 L810 374 L822 374 L822 366" fill="none" stroke="#cdcdcd" stroke-width="1.5"/><path d="M814 370 L823 361 M819 361 L824 361 L824 366" fill="none" stroke="#cdcdcd" stroke-width="1.6"/></g><g transform="translate(816 390) scale(0.82) translate(-816 -390)"><path d="M816 384 L823 388 L816 392 L809 388 Z" fill="#cdcdcd"/><path d="M809 391 L816 395 L823 391" fill="none" stroke="#cdcdcd" stroke-width="1.5"/></g><g transform="translate(816 413) scale(0.82) translate(-816 -413)"><rect x="810" y="406" width="8" height="8" fill="none" stroke="#cdcdcd" stroke-width="1.3"/><rect x="814" y="410" width="9" height="9" fill="#454545" stroke="#cdcdcd" stroke-width="1.3"/></g></svg>
<div class="a" style="left:834px;top:62px;width:190px;height:486px;background:#4b4b4b;"></div>
<div class="a" style="left:834px;top:62px;width:190px;height:13px;background:#383838;"></div>
<div class="a" style="left:834px;top:62px;width:47px;height:13px;background:#4e4e4e;"></div>
<div class="t" style="left:839px;top:63px;font-size:9px;color:#e8e8e8;font-weight:bold;transform:scaleX(0.92);transform-origin:0 0;">Biblioteki</div>
<svg class="a" style="left:1008px;top:64px" width="14" height="9" viewBox="0 0 14 9"><path d="M5 2 L13 2 M5 4.5 L13 4.5 M5 7 L13 7" stroke="#bbb" stroke-width="1"/><path d="M1 4.5 L4 3 L4 6 Z" fill="#bbb"/></svg>
<div class="a" style="left:840px;top:80px;width:137px;height:14px;background:#3f3f3f;"></div>
<div class="t" style="left:849px;top:81px;font-size:9px;color:#f0f0f0;font-weight:bold;transform:scaleX(0.92);transform-origin:0 0;">Moja biblioteka</div>
<div class="arr" style="left:969px;top:86px;border-top-color:#ddd"></div>
<div class="a" style="left:984px;top:78px;width:16px;height:16px;background:#262626;"></div>
<div class="a" style="left:987px;top:81px;width:5px;height:5px;background:#ddd;"></div>
<div class="a" style="left:993px;top:81px;width:5px;height:5px;background:#ddd;"></div>
<div class="a" style="left:987px;top:87px;width:5px;height:5px;background:#ddd;"></div>
<div class="a" style="left:993px;top:87px;width:5px;height:5px;background:#ddd;"></div>
<svg class="a" style="left:1002px;top:79px" width="14" height="14" viewBox="0 0 14 14"><path d="M2 2.5 L12 2.5 M2 5.5 L12 5.5 M2 8.5 L12 8.5 M2 11.5 L12 11.5" stroke="#ccc" stroke-width="1.5"/></svg>
<div class="a" style="left:840px;top:99px;width:162px;height:17px;background:#a7a7a7;"></div>
<svg class="a" style="left:842px;top:101px" width="12" height="12" viewBox="0 0 12 12"><circle cx="5" cy="5" r="3.2" fill="none" stroke="#3f6fbf" stroke-width="1.8"/><path d="M7.3 7.3 L10.5 10.5" stroke="#3f6fbf" stroke-width="2"/></svg>
<div class="t" style="left:854px;top:102px;font-size:9px;color:#858585;transform:scaleX(0.9);transform-origin:0 0;">Przeszukaj Adobe Stock</div>
<div class="a" style="left:1004px;top:97px;width:12px;height:19px;background:#444;"></div>
<div class="arr" style="left:1007px;top:104px;border-top-color:#ddd"></div>
<div class="a" style="left:834px;top:118px;width:190px;height:1px;background:#404040;"></div>
<div class="a" style="left:1014px;top:119px;width:10px;height:410px;background:#3d3d3d;"></div>
<svg class="a" style="left:880px;top:222px" width="88" height="88" viewBox="0 0 88 88"><circle cx="44" cy="44" r="39.5" fill="none" stroke="#9a9a9a" stroke-width="1.3" stroke-dasharray="4 3"/><path d="M44 37 L44 51 M37 44 L51 44" stroke="#8a8a8a" stroke-width="1.3"/></svg>
<div class="t" style="left:834px;top:319px;width:180px;text-align:center;font-size:11px;color:#d8d8d8">Przeciągnij i upuść zasoby</div>
<div class="t" style="left:834px;top:340.5px;width:180px;text-align:center;font-size:9px;color:#9d9d9d;letter-spacing:-0.1px">Przeciągnij i upuść dowolny element</div>
<div class="t" style="left:834px;top:353.1px;width:180px;text-align:center;font-size:9px;color:#9d9d9d;letter-spacing:-0.1px">w dokumencie, aby dodać grafikę, lub</div>
<div class="t" style="left:834px;top:365.7px;width:180px;text-align:center;font-size:9px;color:#9d9d9d;letter-spacing:-0.1px">użyj poniższych przycisków, aby</div>
<div class="t" style="left:834px;top:378.3px;width:180px;text-align:center;font-size:9px;color:#9d9d9d;letter-spacing:-0.1px">dodać kolory, style znakowe i inne</div>
<div class="t" style="left:834px;top:390.9px;width:180px;text-align:center;font-size:9px;color:#9d9d9d;letter-spacing:-0.1px">elementy.</div>
<svg class="a" style="left:915px;top:408px" width="16" height="16" viewBox="0 0 16 16"><circle cx="8" cy="8" r="6" fill="none" stroke="#a5a5a5" stroke-width="1.3"/><text x="8" y="11.5" font-size="9" text-anchor="middle" fill="#a5a5a5" font-family="Liberation Sans" font-weight="bold">?</text></svg>
<div class="a" style="left:834px;top:529px;width:190px;height:1px;background:#3c3c3c;"></div>
<div class="a" style="left:834px;top:530px;width:190px;height:18px;background:#474747;"></div>
<svg class="a" style="left:834px;top:530px" width="190" height="18" viewBox="834 530 190 18"><path d="M841 544 L848 533 L852 537 L848 544 Z" fill="#888"/><path d="M843 545 L853 545" stroke="#888"/><text x="862" y="545" font-size="12" fill="#9a9a9a" font-family="Liberation Sans">A</text><path d="M884 533 L889 533 L889 545 M887 533 L887 545 M884 533 C881 533 881 539 884 539 L887 539" fill="#8a8a8a" stroke="#8a8a8a" stroke-width="1.2"/><rect x="899" y="533.5" width="11" height="11" fill="#fff" stroke="#777"/><rect x="918.5" y="533.5" width="11" height="11" fill="#222" stroke="#888"/><circle cx="982" cy="540" r="4.5" fill="none" stroke="#bbb" stroke-width="1.6"/><circle cx="987" cy="539" r="4.5" fill="none" stroke="#bbb" stroke-width="1.6"/><path d="M978 544 L992 544" stroke="#bbb" stroke-width="1.4"/><path d="M998 535 L1008 535 M1002 533 L1004 533 M999 536 L1000 545 L1006 545 L1007 536" fill="#777" stroke="#777" stroke-width="1.2"/></svg>
<div class="a" style="left:59px;top:536px;width:741px;height:13px;background:#424242;"></div>
<div class="a" style="left:59px;top:536px;width:741px;height:1px;background:#2e2e2e;"></div>
<div class="a" style="left:63px;top:538px;width:42px;height:10px;background:#9a9a9a;"></div>
<div class="t" style="left:65px;top:538px;font-size:9px;color:#333;transform:scaleX(0.9);transform-origin:0 0;">400%</div>
<div class="a" style="left:105px;top:538px;width:12px;height:10px;background:#505050;"></div>
<div class="arr" style="left:108px;top:542px;border-top-color:#ddd"></div>
<svg class="a" style="left:123px;top:539px" width="24" height="8" viewBox="0 0 24 8"><path d="M1 1 L1 7 M7 1 L2 4 L7 7 Z M19 1 L14 4 L19 7 Z" fill="#606060" stroke="#606060" stroke-width="1"/></svg>
<div class="a" style="left:152px;top:538px;width:33px;height:10px;background:#9a9a9a;"></div>
<div class="t" style="left:155px;top:538px;font-size:9px;color:#333;">1</div>
<div class="a" style="left:185px;top:538px;width:12px;height:10px;background:#505050;"></div>
<div class="arr" style="left:188px;top:542px;border-top-color:#ddd"></div>
<svg class="a" style="left:203px;top:539px" width="24" height="8" viewBox="0 0 24 8"><path d="M4 1 L9 4 L4 7 Z M16 1 L21 4 L16 7 Z M22 1 L22 7" fill="#606060" stroke="#606060" stroke-width="1"/></svg>
<div class="t" style="left:289px;top:538.5px;font-size:9px;color:#dcdcdc;transform:scaleX(0.82);transform-origin:0 0;">Zaznaczenie</div>
<div class="a" style="left:394px;top:538px;width:10px;height:10px;background:#3a3a3a;"></div>
<div class="a" style="left:398px;top:540px;width:0;height:0;border-top:3px solid transparent;border-bottom:3px solid transparent;border-left:4px solid #aaa"></div>
<div class="a" style="left:410px;top:539px;width:0;height:0;border-top:4px solid transparent;border-bottom:4px solid transparent;border-right:5px solid #ddd"></div>
<div class="a" style="left:588px;top:537px;width:13px;height:11px;background:#9b9b9b;"></div>
<div class="a" style="left:777px;top:539px;width:0;height:0;border-top:4px solid transparent;border-bottom:4px solid transparent;border-left:5px solid #ddd"></div>
<div class="a" style="left:786px;top:536px;width:14px;height:13px;background:#3a3a3a;"></div>
<div class="a" style="left:0px;top:549px;width:1024px;height:5px;background:#0b0b0b;"></div>
<div class="a" style="left:800px;top:548px;width:224px;height:1px;background:#0b0b0b;"></div>
<div class="a" style="left:0px;top:548px;width:59px;height:1px;background:#0b0b0b;"></div>
</body></html>
